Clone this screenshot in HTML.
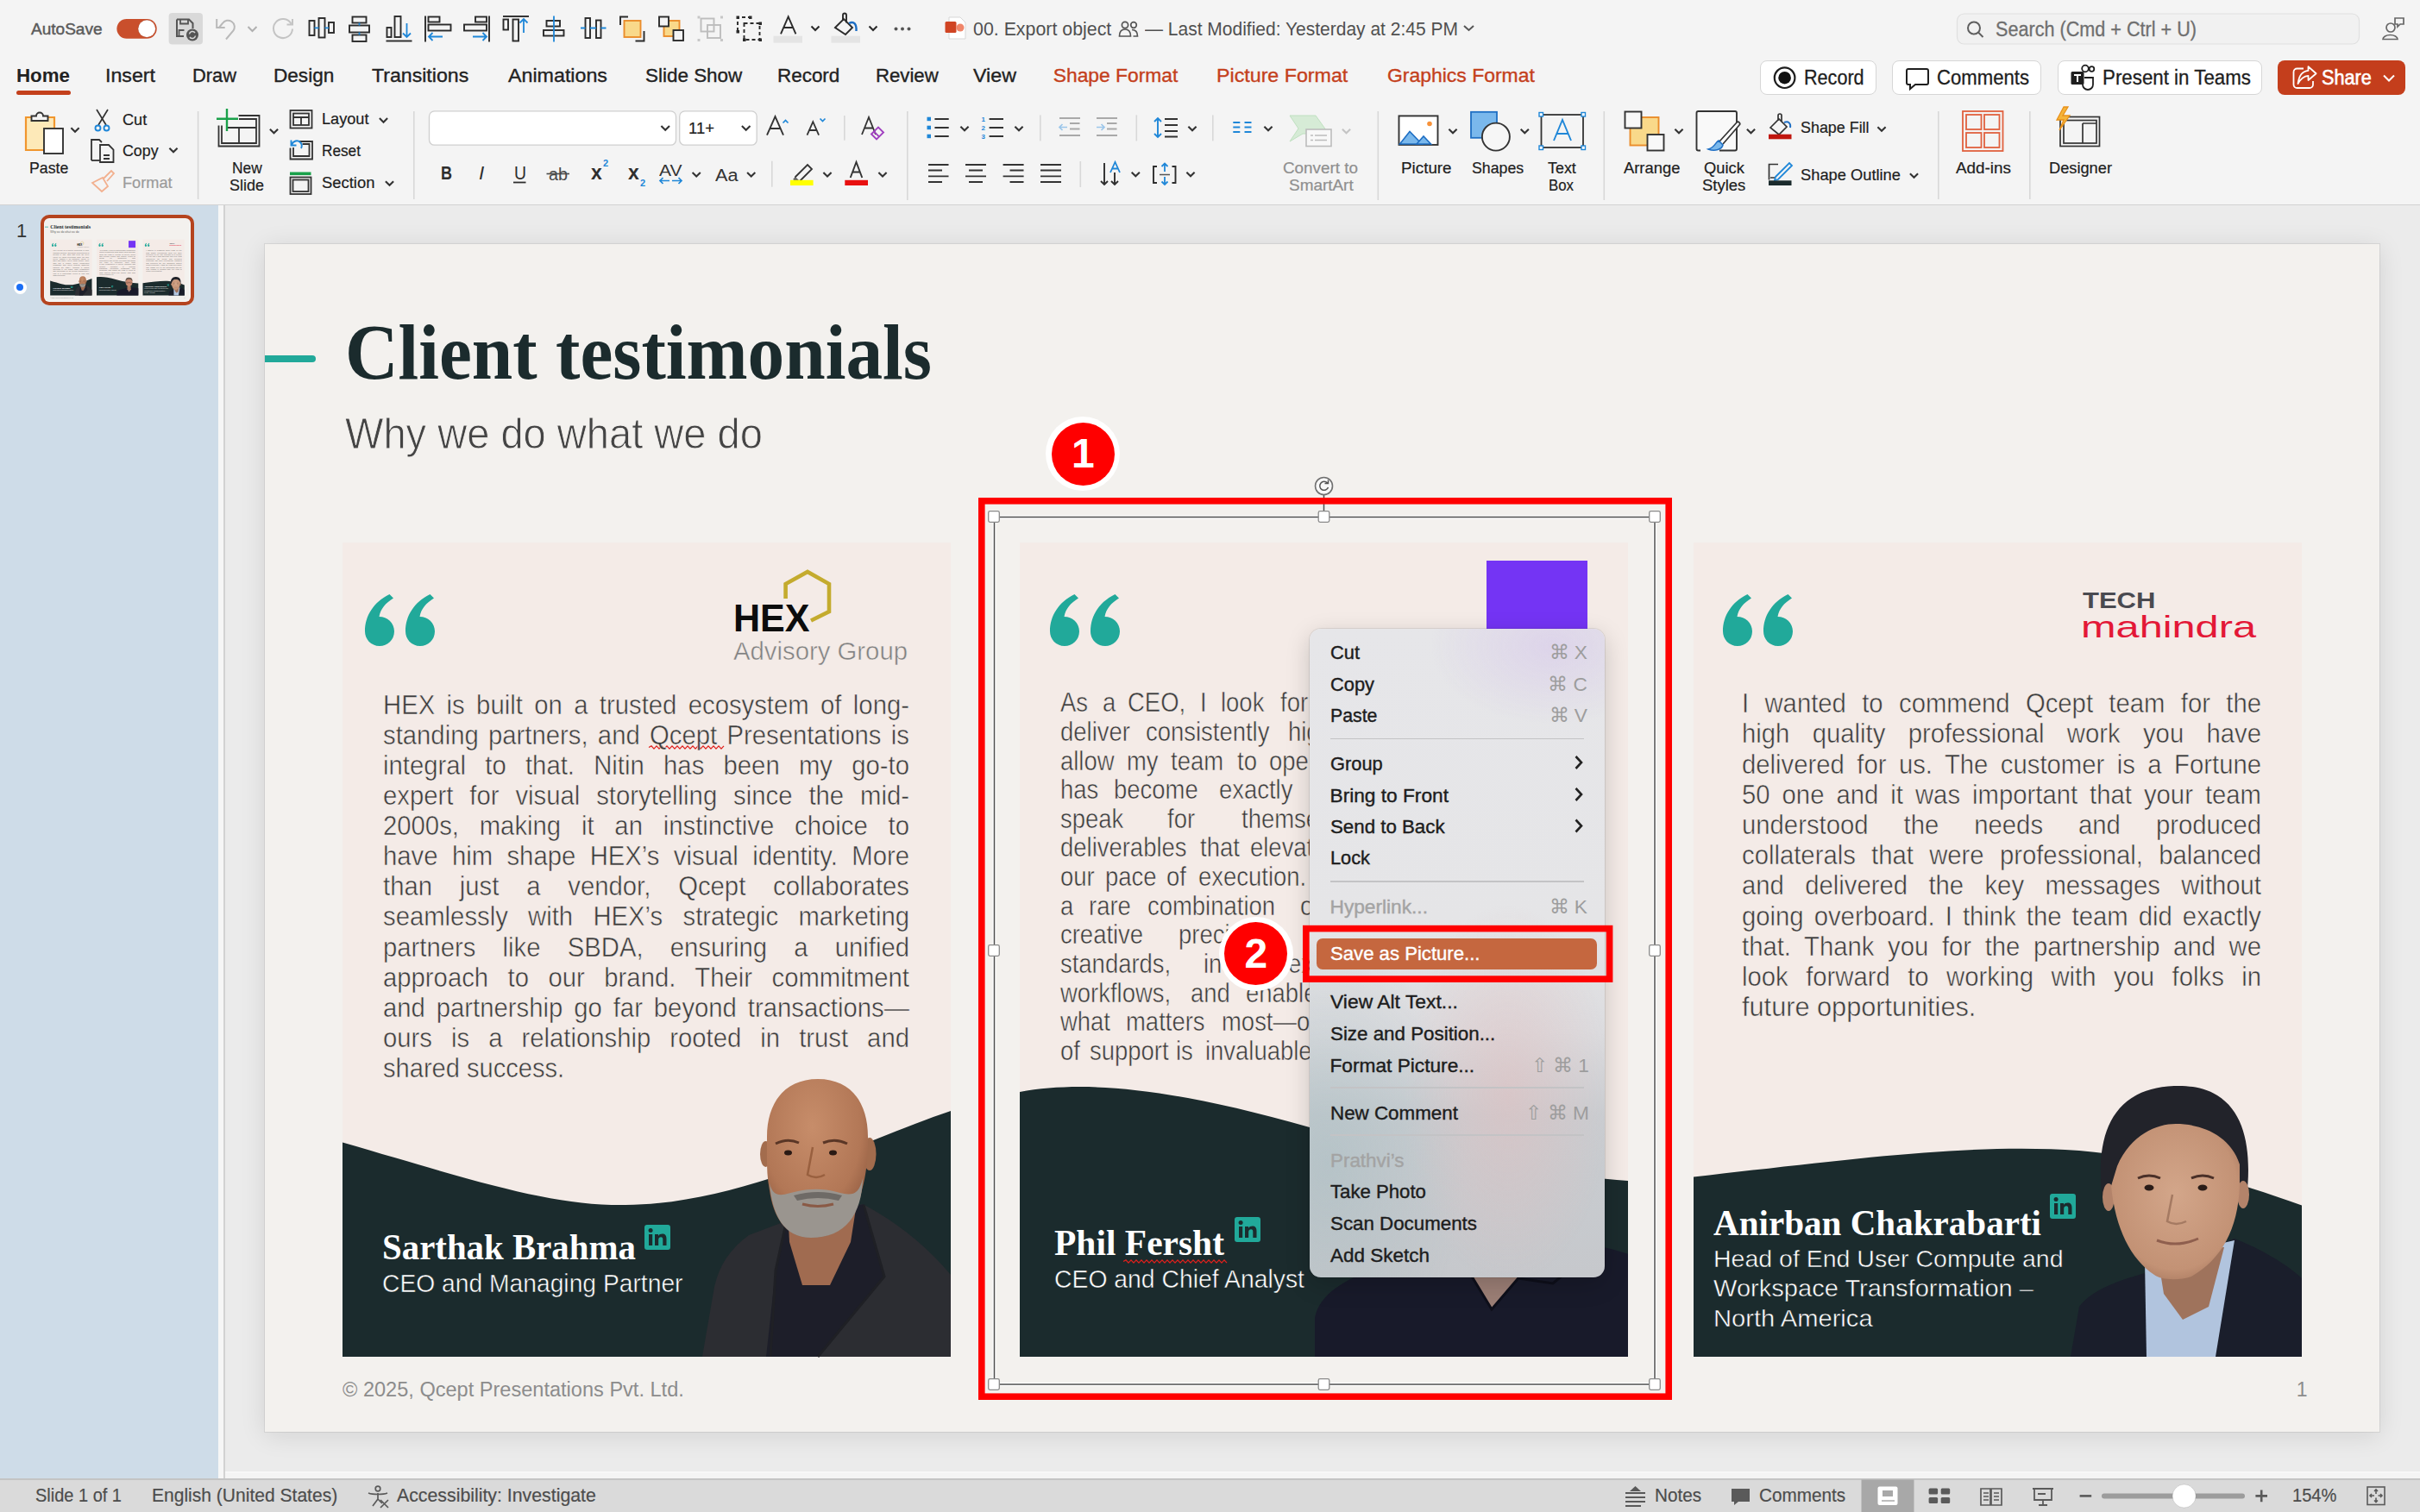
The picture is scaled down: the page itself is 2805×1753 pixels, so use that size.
<!DOCTYPE html><html><head><meta charset="utf-8"><style>*{margin:0;padding:0;box-sizing:border-box}
html,body{width:2805px;height:1753px;overflow:hidden}
body{position:relative;background:#f4f4f4;font-family:"Liberation Sans",sans-serif}
.a{position:absolute}
.t{position:absolute;white-space:nowrap;line-height:1;font-family:"Liberation Sans",sans-serif}
svg{overflow:visible}
</style></head><body><div class="a" style="left:0;top:0;width:2805px;height:237px;background:#f4f4f4"></div><div class="a" style="left:0;top:236.5px;width:2805px;height:2.2px;background:#d2d2d2"></div><div class="t" style="left:36.0px;top:23.5px;font:normal 19.2px 'Liberation Sans',sans-serif;line-height:1;color:#5a5a5a;transform-origin:0 0;transform:scaleX(0.9920);-webkit-text-stroke:0.45px #5a5a5a;">AutoSave</div>
<svg class="a" style="left:0;top:0" width="2805" height="238"><rect x="135.4" y="22" width="46.3" height="22.7" rx="11.35" fill="#c94f2c"/><circle cx="170.2" cy="33.3" r="10" fill="#fff" stroke="rgba(0,0,0,0.12)" stroke-width="0.8"/><rect x="195.6" y="15" width="39.4" height="36.4" rx="4" fill="#d9d9d9"/><path d="M205 22.5h14l4.5 4.5v6 M205 22.5v19.5h8" fill="none" stroke="#555" stroke-width="2"/><path d="M209 22.5v5h9v-5" fill="none" stroke="#555" stroke-width="1.8"/><path d="M207.5 42v-7h6" fill="none" stroke="#555" stroke-width="1.8"/><circle cx="223" cy="40.5" r="7" fill="#555"/><path d="M219.5 39.5a3.6 3.6 0 0 1 6.5-1.5 M226.5 41.5a3.6 3.6 0 0 1-6.5 1.5" fill="none" stroke="#d9d9d9" stroke-width="1.5"/><path d="M262 45.5l8.5-10a7.5 7.5 0 1 0-12.5-8.5l-4.5 5.5 M251.2 22v10h9.5" fill="none" stroke="#b9b9b9" stroke-width="2"/><path d="M287.5 31l5 5 5-5" fill="none" stroke="#b0b0b0" stroke-width="2"/><path d="M337.5 27.5a11 11 0 1 0 1.5 6 M339 22v6.5h-6.5" fill="none" stroke="#c4c4c4" stroke-width="2"/><rect x="358.5" y="24" width="6" height="17" fill="none" stroke="#2b2b2b" stroke-width="1.9"/><rect x="369.5" y="21" width="7" height="22.5" fill="none" stroke="#2b2b2b" stroke-width="1.9"/><rect x="381" y="26" width="6" height="12" fill="none" stroke="#2b2b2b" stroke-width="1.9"/><path d="M364.5 32.4h5 M376.5 32.4h4.5" stroke="#1f87d8" stroke-width="1.8"/><rect x="408.5" y="19.5" width="16" height="7" fill="none" stroke="#2b2b2b" stroke-width="1.9"/><rect x="405" y="29.5" width="23" height="8" fill="none" stroke="#2b2b2b" stroke-width="1.9"/><rect x="408.5" y="40.5" width="16" height="7.5" fill="none" stroke="#2b2b2b" stroke-width="1.9"/><path d="M416.5 26.5v3 M416.5 37.5v3" stroke="#1f87d8" stroke-width="1.8"/><rect x="448.5" y="32" width="5" height="11" fill="none" stroke="#2b2b2b" stroke-width="1.9"/><rect x="457.5" y="19" width="7" height="24" fill="none" stroke="#2b2b2b" stroke-width="1.9"/><path d="M447.5 47.5h30" stroke="#2b2b2b" stroke-width="1.9"/><path d="M471.5 27v16 M467 38.5l4.5 4.5 4.5-4.5" fill="none" stroke="#1f87d8" stroke-width="1.8"/><path d="M493 18.5v30" stroke="#2b2b2b" stroke-width="1.9"/><rect x="496.5" y="19.5" width="13" height="6" fill="none" stroke="#2b2b2b" stroke-width="1.9"/><rect x="496.5" y="28.5" width="26" height="7" fill="none" stroke="#2b2b2b" stroke-width="1.9"/><path d="M497 42.5h16 M501.5 38l-4.5 4.5 4.5 4.5" fill="none" stroke="#1f87d8" stroke-width="1.8"/><path d="M567 18.5v30" stroke="#2b2b2b" stroke-width="1.9"/><rect x="551" y="19.5" width="13" height="6" fill="none" stroke="#2b2b2b" stroke-width="1.9"/><rect x="538" y="28.5" width="26" height="7" fill="none" stroke="#2b2b2b" stroke-width="1.9"/><path d="M548 42.5h16 M559.5 38l4.5 4.5-4.5 4.5" fill="none" stroke="#1f87d8" stroke-width="1.8"/><path d="M583 19h30" stroke="#2b2b2b" stroke-width="1.9"/><rect x="583.5" y="22.5" width="5.5" height="12" fill="none" stroke="#2b2b2b" stroke-width="1.9"/><rect x="594.5" y="22.5" width="6.5" height="25" fill="none" stroke="#2b2b2b" stroke-width="1.9"/><path d="M607 38v-16 M602.5 26.5l4.5-4.5 4.5 4.5" fill="none" stroke="#1f87d8" stroke-width="1.8"/><rect x="633.5" y="24" width="15.5" height="6.5" fill="none" stroke="#2b2b2b" stroke-width="1.9"/><rect x="630" y="35" width="23.5" height="6.5" fill="none" stroke="#2b2b2b" stroke-width="1.9"/><path d="M642 18.5v30" stroke="#1f87d8" stroke-width="1.8"/><rect x="678.5" y="21" width="5.5" height="23" fill="none" stroke="#2b2b2b" stroke-width="1.9"/><rect x="691" y="23.5" width="5.5" height="20.5" fill="none" stroke="#2b2b2b" stroke-width="1.9"/><path d="M673 32.5h5.5 M684 32.5h7 M696.5 32.5h6" stroke="#1f87d8" stroke-width="1.8"/><path d="M719 29v-9.5h9" fill="none" stroke="#2b2b2b" stroke-width="1.9"/><path d="M746.5 36v11.5h-10" fill="none" stroke="#2b2b2b" stroke-width="1.9"/><rect x="723.5" y="24" width="19" height="19" fill="#f9d98a" stroke="#ea8d2b" stroke-width="1.9"/><rect x="769.5" y="24" width="18" height="18" fill="#f9d98a" stroke="#ea8d2b" stroke-width="1.9"/><rect x="764" y="19.5" width="11" height="11" fill="#f4f4f4" stroke="#2b2b2b" stroke-width="1.9"/><rect x="780.5" y="35" width="11.5" height="12" fill="#f4f4f4" stroke="#2b2b2b" stroke-width="1.9"/><g stroke="#bdbdbd" stroke-width="1.9" fill="none"><rect x="812.5" y="21.5" width="15" height="15"/><rect x="820" y="29" width="15" height="15"/></g><g fill="#c7c7c7"><rect x="808.5" y="18.5" width="3" height="3"/><rect x="835" y="18.5" width="3" height="3"/><rect x="808.5" y="45" width="3" height="3"/><rect x="835" y="45" width="3" height="3"/></g><g stroke="#2b2b2b" stroke-width="1.9" fill="none" stroke-dasharray="4 3"><path d="M855 36v-16h16"/><rect x="862.5" y="27" width="18" height="19"/></g><g fill="#2b2b2b"><rect x="853.5" y="18.5" width="3.5" height="3.5"/><rect x="868" y="18.5" width="3.5" height="3.5"/><rect x="853.5" y="35" width="3.5" height="3.5"/><rect x="861" y="44.5" width="3.5" height="3.5"/><rect x="879.5" y="44.5" width="3.5" height="3.5"/><rect x="879.5" y="25.5" width="3.5" height="3.5"/></g><rect x="896.5" y="41.7" width="33.5" height="8" fill="#e4e4e4"/><path d="M905 39.4l8.7-20 8.7 20 M908.3 32h10.8" fill="none" stroke="#2b2b2b" stroke-width="1.9"/><path d="M940.5 30.5l4.5 4.5 4.5-4.5" fill="none" stroke="#2b2b2b" stroke-width="2.1"/><rect x="963.5" y="41.7" width="33.5" height="8" fill="#e4e4e4"/><path d="M968 32l10-10 10 10-8 8z M977 24v-6.5a2 2 0 0 1 4 0v9" fill="none" stroke="#2b2b2b" stroke-width="1.9"/><path d="M984 27c6-3 9 1 8.5 9" fill="none" stroke="#1f6fc4" stroke-width="2.4"/><path d="M1007.5 30.5l4.5 4.5 4.5-4.5" fill="none" stroke="#2b2b2b" stroke-width="2.1"/><g fill="#555"><circle cx="1038.5" cy="33.5" r="2"/><circle cx="1046" cy="33.5" r="2"/><circle cx="1053.5" cy="33.5" r="2"/></g><path d="M1100 20h13l6 6v19h-19z" fill="#fff" stroke="#d7d7d7" stroke-width="1"/><rect x="1095.5" y="25" width="13" height="13" rx="1.5" fill="#d04423"/><circle cx="1113" cy="32" r="4.5" fill="#f0866a"/><g fill="none" stroke="#555" stroke-width="1.7"><circle cx="1304" cy="29" r="3.6"/><path d="M1297.5 42c0-6 3-8 6.5-8s6.5 2 6.5 8z"/><circle cx="1314" cy="29" r="3.3"/><path d="M1312 34.5c4 0 6.5 2 6.5 7.5h-5"/></g><path d="M1697 30l5.5 5 5.5-5" fill="none" stroke="#555" stroke-width="2"/><rect x="2268.5" y="16" width="466" height="35" rx="8" fill="#f1f1f1" stroke="#e0e0e0" stroke-width="1.2"/><g fill="none" stroke="#5f5f5f" stroke-width="2"><circle cx="2288" cy="32.5" r="7"/><path d="M2293 37.5l5.5 5.5"/></g><g fill="none" stroke="#666" stroke-width="1.7"><circle cx="2771" cy="32" r="5"/><path d="M2762 45.5a8.5 5 0 0 1 17 0z"/><path d="M2776 21h10v7h-4l-3 3v-3h-3z"/></g></svg><div class="t" style="left:1127.7px;top:21.9px;font:normal 22.8px 'Liberation Sans',sans-serif;line-height:1;color:#505050;transform-origin:0 0;transform:scaleX(0.9369);">00. Export object</div>
<div class="t" style="left:1326.8px;top:21.9px;font:normal 22.8px 'Liberation Sans',sans-serif;line-height:1;color:#505050;transform-origin:0 0;transform:scaleX(0.9209);">— Last Modified: Yesterday at 2:45 PM</div>
<div class="t" style="left:2313.0px;top:22.5px;font:normal 23px 'Liberation Sans',sans-serif;line-height:1;color:#6f6f6f;transform-origin:0 0;transform:scaleX(0.9397);-webkit-text-stroke:0.3px #6f6f6f;">Search (Cmd + Ctrl + U)</div>
<div class="t" style="left:19.2px;top:76.1px;font:bold 22.8px 'Liberation Sans',sans-serif;line-height:1;color:#222;transform-origin:0 0;transform:scaleX(0.9787);">Home</div>
<div class="t" style="left:121.5px;top:76.1px;font:normal 22.8px 'Liberation Sans',sans-serif;line-height:1;color:#222;transform-origin:0 0;transform:scaleX(1.0171);-webkit-text-stroke:0.35px #222;">Insert</div>
<div class="t" style="left:223.4px;top:76.1px;font:normal 22.8px 'Liberation Sans',sans-serif;line-height:1;color:#222;transform-origin:0 0;transform:scaleX(0.9585);-webkit-text-stroke:0.35px #222;">Draw</div>
<div class="t" style="left:316.7px;top:76.1px;font:normal 22.8px 'Liberation Sans',sans-serif;line-height:1;color:#222;transform-origin:0 0;transform:scaleX(0.9905);-webkit-text-stroke:0.35px #222;">Design</div>
<div class="t" style="left:430.6px;top:76.1px;font:normal 22.8px 'Liberation Sans',sans-serif;line-height:1;color:#222;transform-origin:0 0;transform:scaleX(1.0139);-webkit-text-stroke:0.35px #222;">Transitions</div>
<div class="t" style="left:588.6px;top:76.1px;font:normal 22.8px 'Liberation Sans',sans-serif;line-height:1;color:#222;transform-origin:0 0;transform:scaleX(1.0196);-webkit-text-stroke:0.35px #222;">Animations</div>
<div class="t" style="left:747.7px;top:76.1px;font:normal 22.8px 'Liberation Sans',sans-serif;line-height:1;color:#222;transform-origin:0 0;transform:scaleX(0.9845);-webkit-text-stroke:0.35px #222;">Slide Show</div>
<div class="t" style="left:901.4px;top:76.1px;font:normal 22.8px 'Liberation Sans',sans-serif;line-height:1;color:#222;transform-origin:0 0;transform:scaleX(0.9837);-webkit-text-stroke:0.35px #222;">Record</div>
<div class="t" style="left:1014.5px;top:76.1px;font:normal 22.8px 'Liberation Sans',sans-serif;line-height:1;color:#222;transform-origin:0 0;transform:scaleX(0.9725);-webkit-text-stroke:0.35px #222;">Review</div>
<div class="t" style="left:1127.7px;top:76.1px;font:normal 22.8px 'Liberation Sans',sans-serif;line-height:1;color:#222;transform-origin:0 0;transform:scaleX(1.0182);-webkit-text-stroke:0.35px #222;">View</div>
<div class="t" style="left:1220.8px;top:76.1px;font:normal 22.8px 'Liberation Sans',sans-serif;line-height:1;color:#c4401c;transform-origin:0 0;-webkit-text-stroke:0.35px #c4401c;">Shape Format</div>
<div class="t" style="left:1410.0px;top:76.1px;font:normal 22.8px 'Liberation Sans',sans-serif;line-height:1;color:#c4401c;transform-origin:0 0;transform:scaleX(1.0187);-webkit-text-stroke:0.35px #c4401c;">Picture Format</div>
<div class="t" style="left:1607.5px;top:76.1px;font:normal 22.8px 'Liberation Sans',sans-serif;line-height:1;color:#c4401c;transform-origin:0 0;transform:scaleX(1.0060);-webkit-text-stroke:0.35px #c4401c;">Graphics Format</div>
<div class="a" style="left:18.5px;top:105px;width:63.2px;height:5px;border-radius:3px;background:#c4401c"></div><div class="a" style="left:2039.5px;top:70px;width:135.19999999999982px;height:40px;background:#fff;border:1.5px solid #d6d6d6;border-radius:8px"></div><div class="a" style="left:2193px;top:70px;width:173.4000000000001px;height:40px;background:#fff;border:1.5px solid #d6d6d6;border-radius:8px"></div><div class="a" style="left:2385px;top:70px;width:236.69999999999982px;height:40px;background:#fff;border:1.5px solid #d6d6d6;border-radius:8px"></div><div class="a" style="left:2639.5px;top:70px;width:148.5px;height:40px;background:#c43e1c;border-radius:8px"></div><div class="t" style="left:2091.4px;top:79.0px;font:normal 23.5px 'Liberation Sans',sans-serif;line-height:1;color:#1e1e1e;transform-origin:0 0;transform:scaleX(0.9187);-webkit-text-stroke:0.3px #1e1e1e;">Record</div>
<div class="t" style="left:2245.4px;top:79.0px;font:normal 23.5px 'Liberation Sans',sans-serif;line-height:1;color:#1e1e1e;transform-origin:0 0;transform:scaleX(0.9418);-webkit-text-stroke:0.3px #1e1e1e;">Comments</div>
<div class="t" style="left:2436.8px;top:79.0px;font:normal 23.5px 'Liberation Sans',sans-serif;line-height:1;color:#1e1e1e;transform-origin:0 0;transform:scaleX(0.9496);-webkit-text-stroke:0.3px #1e1e1e;">Present in Teams</div>
<div class="t" style="left:2691.4px;top:79.0px;font:normal 23.5px 'Liberation Sans',sans-serif;line-height:1;color:#ffffff;transform-origin:0 0;transform:scaleX(0.9217);-webkit-text-stroke:0.6px #fff;">Share</div>
<svg class="a" style="left:0;top:0" width="2805" height="238"><circle cx="2068.6" cy="90.2" r="11.8" fill="none" stroke="#1e1e1e" stroke-width="2.2"/><circle cx="2068.6" cy="90.2" r="7.3" fill="#111"/><path d="M2212 80h21a2 2 0 0 1 2 2v14a2 2 0 0 1-2 2h-13l-6 5v-5h-2a2 2 0 0 1-2-2v-14a2 2 0 0 1 2-2z" fill="none" stroke="#1e1e1e" stroke-width="2"/><rect x="2400.5" y="83" width="15" height="15" rx="1.5" fill="#1e1e1e"/><path d="M2404 87h8 M2408 87v8" stroke="#fff" stroke-width="2"/><g fill="none" stroke="#1e1e1e" stroke-width="1.8"><circle cx="2417" cy="79.5" r="3.8"/><circle cx="2424.5" cy="80" r="2.8"/><path d="M2416 90h10v8a6 6 0 0 1-12 0"/></g><g fill="none" stroke="#fff" stroke-width="2"><path d="M2670 79.5h-7.5a4 4 0 0 0-4 4v14.5a4 4 0 0 0 4 4h14.5a4 4 0 0 0 4-4v-4" stroke-width="1.8"/><path d="M2663.5 97C2664.5 88.5 2668.5 82.5 2675.5 81.8V77.2L2684.6 85.2L2675.5 93V87.8C2670 88.2 2666.5 91.5 2663.5 97Z" stroke-width="1.8" stroke-linejoin="round"/></g><path d="M2763 87.5l6 6 6-6" fill="none" stroke="#fff" stroke-width="2"/></svg><svg class="a" style="left:0;top:0" width="2805" height="238"><path d="M30 136h33v38h-33z" fill="#fde9b8" stroke="#f0962e" stroke-width="2.2"/><path d="M36.5 140v-5.5h5.5a4 4 0 0 1 8 0h5.5v5.5z" fill="#f4f4f4" stroke="#333" stroke-width="1.9"/><rect x="51" y="149" width="22" height="29" fill="#fff" stroke="#333" stroke-width="1.9"/><path d="M82.4 148.2l4.6 4.6 4.6 -4.6" fill="none" stroke="#333" stroke-width="2.1"/><g fill="none" stroke="#333" stroke-width="1.7"><path d="M112 127l11 18 M125 127l-11 18"/></g><g fill="none" stroke="#1f87d8" stroke-width="1.9"><circle cx="113.5" cy="148.5" r="3"/><circle cx="123.5" cy="148.5" r="3"/></g><g fill="none" stroke="#333" stroke-width="1.8"><path d="M106 186v-24h9l3 3"/><path d="M106 186h10"/><path d="M116 168h10l5.5 5.5v14.5h-15.5z"/><path d="M120 180h7 M120 184h7"/></g><path d="M196.4 171.7l4.6 4.6 4.6 -4.6" fill="none" stroke="#333" stroke-width="2.1"/><g fill="none" stroke="#f2b08f" stroke-width="1.8"><path d="M107 212l12-6 6 10-7 6z"/><path d="M120 207l9-9 3 3-8 9"/></g><rect x="228.8" y="129" width="1.6" height="102" fill="#d8d8d8"/><g fill="none" stroke="#333" stroke-width="1.8"><path d="M276.5 134h24v35.5h-47v-24"/><path d="M257 145.5v20.5h40v-28h-20"/><path d="M264 148h33 M277 148v18"/></g><path d="M263 126v26 M251 137.8h25" stroke="#1aa14a" stroke-width="2.4"/><path d="M312.9 149.7l4.6 4.6 4.6 -4.6" fill="none" stroke="#333" stroke-width="2.1"/><g fill="none" stroke="#333" stroke-width="1.8"><rect x="336.5" y="128" width="25" height="20.5"/><rect x="340" y="131.5" width="18" height="13.5"/><path d="M340 136h18 M349 136v9"/></g><path d="M439.9 137.1l4.6 4.6 4.6 -4.6" fill="none" stroke="#333" stroke-width="2.1"/><g fill="none" stroke="#333" stroke-width="1.8"><path d="M347 164h15v20.5h-25.5v-13"/><path d="M340 171v10h18.5v-14h-8"/></g><path d="M338 168c2-5 7-6 10-3 2 2 2 5 1 7 M337.5 162.5v6h6" fill="none" stroke="#1f87d8" stroke-width="1.9"/><rect x="336" y="199.5" width="24.5" height="3.6" fill="#1aa14a"/><g fill="none" stroke="#333" stroke-width="1.8"><rect x="336.5" y="205.5" width="24" height="19.5"/><rect x="339.5" y="208.5" width="18" height="13.5"/></g><path d="M446.9 210.2l4.6 4.6 4.6 -4.6" fill="none" stroke="#333" stroke-width="2.1"/><rect x="479" y="129" width="1.6" height="102" fill="#d8d8d8"/><rect x="497.5" y="128.9" width="286" height="39.3" rx="6" fill="#fff" stroke="#cfcfcf" stroke-width="1.3"/><path d="M766.4 146.0l4.8 4.8 4.8 -4.8" fill="none" stroke="#333" stroke-width="2.1"/><rect x="787.7" y="128.9" width="89.5" height="39.3" rx="6" fill="#fff" stroke="#cfcfcf" stroke-width="1.3"/><path d="M859.9 146.0l4.8 4.8 4.8 -4.8" fill="none" stroke="#333" stroke-width="2.1"/><path d="M889 156.7l9.5-21.5 9.5 21.5 M892.5 149h12" fill="none" stroke="#333" stroke-width="1.9"/><path d="M907.5 142.5l3-3 3 3" fill="none" stroke="#1f87d8" stroke-width="1.7"/><path d="M935.5 156.7l6.8-15.5 6.8 15.5 M938 151h8.6" fill="none" stroke="#333" stroke-width="1.8"/><path d="M950.5 137.5l3 3 3-3" fill="none" stroke="#1f87d8" stroke-width="1.7"/><rect x="978" y="134" width="1.6" height="28.7" fill="#d8d8d8"/><path d="M999 156l8-20 8 20 M1002 148.5h10" fill="none" stroke="#333" stroke-width="1.8"/><path d="M1010 155.5l8-8 6 6-8 8z M1013 152.5l6 6" fill="none" stroke="#a040c0" stroke-width="1.9"/><rect x="1051" y="129" width="1.6" height="103" fill="#d8d8d8"/><path d="M595 211.5h14.5" stroke="#2e2e2e" stroke-width="1.8"/><path d="M633.5 201.5h26.5" stroke="#4a4a4a" stroke-width="1.6"/><path d="M765 209.5h11 M768.5 206l-3.5 3.5 3.5 3.5 M779 209.5h11 M786.5 206l3.5 3.5-3.5 3.5" fill="none" stroke="#1f87d8" stroke-width="1.7"/><path d="M802.6 200.0l4.6 4.6 4.6 -4.6" fill="none" stroke="#333" stroke-width="2.1"/><path d="M866.1 200.0l4.6 4.6 4.6 -4.6" fill="none" stroke="#333" stroke-width="2.1"/><rect x="894" y="186.7" width="1.6" height="30" fill="#d8d8d8"/><path d="M922 205l14-14 5 5-14 14h-6z" fill="none" stroke="#333" stroke-width="1.8"/><path d="M919 208l3-3 4 4-2 2z" fill="#666"/><rect x="916" y="208.8" width="26.6" height="6.2" fill="#ffff00"/><path d="M954.4 200.0l4.6 4.6 4.6 -4.6" fill="none" stroke="#333" stroke-width="2.1"/><path d="M985.7 206l6.8-18 6.8 18 M988.5 199.5h8" fill="none" stroke="#333" stroke-width="1.9"/><rect x="979.3" y="208.8" width="26.7" height="6.2" fill="#e81010"/><path d="M1018.4 200.0l4.6 4.6 4.6 -4.6" fill="none" stroke="#333" stroke-width="2.1"/><g fill="#1f87d8"><rect x="1074.5" y="135.7" width="4.5" height="4.5"/><rect x="1074.5" y="145.7" width="4.5" height="4.5"/><rect x="1074.5" y="155.7" width="4.5" height="4.5"/></g><path d="M1083.4 138h16.3 M1083.4 148h16.3 M1083.4 158h16.3" stroke="#333" stroke-width="1.8"/><path d="M1113.4 146.7l4.6 4.6 4.6 -4.6" fill="none" stroke="#333" stroke-width="2.1"/><g font-family="Liberation Sans" font-size="8" font-weight="bold" fill="#1f87d8"><text x="1137.5" y="141">1</text><text x="1137.5" y="151">2</text><text x="1137.5" y="161">3</text></g><path d="M1146.6 138h16.4 M1146.6 148h16.4 M1146.6 158h16.4" stroke="#333" stroke-width="1.8"/><path d="M1176.4 146.7l4.6 4.6 4.6 -4.6" fill="none" stroke="#333" stroke-width="2.1"/><rect x="1205" y="133.4" width="1.6" height="30" fill="#d8d8d8"/><path d="M1228 137h24 M1240 143h11.5 M1240 149.5h11.5 M1228 157h24" stroke="#a9a9a9" stroke-width="1.8"/><path d="M1237 147.5h-9 M1231.5 144l-3.5 3.5 3.5 3.5" fill="none" stroke="#9cc6ea" stroke-width="1.7"/><path d="M1271 137h24 M1283 143h11.5 M1283 149.5h11.5 M1271 157h24" stroke="#a9a9a9" stroke-width="1.8"/><path d="M1271 147.5h9 M1276.5 144l3.5 3.5-3.5 3.5" fill="none" stroke="#9cc6ea" stroke-width="1.7"/><rect x="1316.5" y="133.4" width="1.6" height="30" fill="#d8d8d8"/><path d="M1342 137v22 M1338 141l4-4 4 4 M1338 155l4 4 4-4" fill="none" stroke="#1f87d8" stroke-width="1.9"/><path d="M1350 138h15 M1350 145h15 M1350 152h15 M1350 158.5h15" stroke="#333" stroke-width="1.8"/><path d="M1377.4 146.7l4.6 4.6 4.6 -4.6" fill="none" stroke="#333" stroke-width="2.1"/><rect x="1405" y="133.4" width="1.6" height="30" fill="#d8d8d8"/><path d="M1429.3 142h8 M1429.3 147.5h8 M1429.3 153h8 M1442.5 142h8 M1442.5 147.5h8 M1442.5 153h8" stroke="#1f87d8" stroke-width="1.8"/><path d="M1465.4 146.7l4.6 4.6 4.6 -4.6" fill="none" stroke="#333" stroke-width="2.1"/><path d="M1495 134h30l15 21h-30l-15 9 10-15z" fill="#d6ebd6" stroke="#bfe0c0" stroke-width="1"/><rect x="1514" y="150" width="29" height="19.5" fill="#f8f8f8" stroke="#bcbcbc" stroke-width="1.6"/><path d="M1519 157h3 M1524 157h14 M1519 162.5h3 M1524 162.5h14" stroke="#bcbcbc" stroke-width="1.4"/><path d="M1555.9 149.7l4.6 4.6 4.6 -4.6" fill="none" stroke="#c4c4c4" stroke-width="2.1"/><rect x="1596.5" y="129" width="1.6" height="103" fill="#d8d8d8"/><path d="M1076 191h23.5 M1076 197.5h16 M1076 204.3h23.5 M1076 211h16" stroke="#333" stroke-width="1.8"/><path d="M1119 191h24 M1123 197.5h16 M1119 204.3h24 M1123 211h16" stroke="#333" stroke-width="1.8"/><path d="M1162.6 191h24 M1170.5 197.5h16 M1162.6 204.3h24 M1170.5 211h16" stroke="#333" stroke-width="1.8"/><path d="M1206 191h24 M1206 197.5h24 M1206 204.3h24 M1206 211h24" stroke="#333" stroke-width="1.8"/><rect x="1251.5" y="187" width="1.6" height="30" fill="#d8d8d8"/><path d="M1280 189v25 M1276 210l4 4 4-4 M1292 200v14 M1288 210l4 4 4-4" fill="none" stroke="#2e2e2e" stroke-width="1.9"/><path d="M1287 200l5.5-12 5.5 12 M1289 195.5h7" fill="none" stroke="#1f87d8" stroke-width="1.8"/><path d="M1311.7 199.7l4.6 4.6 4.6 -4.6" fill="none" stroke="#333" stroke-width="2.1"/><path d="M1341 193h-4v19h4 M1358.5 193h4v19h-4" fill="none" stroke="#2e2e2e" stroke-width="1.9"/><path d="M1344 202.5h12" stroke="#555" stroke-width="1.5"/><path d="M1350 190v9 M1346.5 193l3.5-3.5 3.5 3.5 M1350 205v9 M1346.5 210.5l3.5 3.5 3.5-3.5" fill="none" stroke="#1f87d8" stroke-width="1.8"/><path d="M1375.4 199.7l4.6 4.6 4.6 -4.6" fill="none" stroke="#333" stroke-width="2.1"/><rect x="1621.5" y="134.4" width="45" height="33.5" fill="#fff" stroke="#333" stroke-width="1.9"/><path d="M1622.5 167l11.5-14.5 14 14.5z" fill="#7ab8ec" stroke="#1f6fc4" stroke-width="1.6"/><path d="M1642 167l8-9 8.5 9z" fill="#7ab8ec" stroke="#1f6fc4" stroke-width="1.6"/><circle cx="1657" cy="143.5" r="2.8" fill="#f7923a"/><path d="M1679.4 149.7l4.6 4.6 4.6 -4.6" fill="none" stroke="#333" stroke-width="2.1"/><rect x="1705" y="129.8" width="30" height="30" fill="#7ab8ec" stroke="#1f6fc4" stroke-width="1.8"/><circle cx="1733.9" cy="158.6" r="16" fill="#f6f6f6" stroke="#333" stroke-width="1.9"/><path d="M1762.7 149.7l4.6 4.6 4.6 -4.6" fill="none" stroke="#333" stroke-width="2.1"/><rect x="1786.5" y="133" width="48.5" height="38" fill="none" stroke="#333" stroke-width="1.8"/><g fill="#fff" stroke="#1f87d8" stroke-width="1.4"><rect x="1784" y="130.5" width="4.5" height="4.5"/><rect x="1833" y="130.5" width="4.5" height="4.5"/><rect x="1784" y="169" width="4.5" height="4.5"/><rect x="1833" y="169" width="4.5" height="4.5"/></g><path d="M1801 163l10-24 10 24 M1804.5 155h13" fill="none" stroke="#1f87d8" stroke-width="1.9"/><rect x="1858.5" y="129" width="1.6" height="103" fill="#d8d8d8"/><rect x="1889.5" y="136" width="33" height="32.5" fill="#f9d98a" stroke="#ea8d2b" stroke-width="1.9"/><rect x="1883.5" y="129.5" width="19" height="19" fill="#f8f8f8" stroke="#333" stroke-width="1.9"/><rect x="1909.5" y="156" width="19" height="18.5" fill="#f8f8f8" stroke="#333" stroke-width="1.9"/><path d="M1941.4 149.7l4.6 4.6 4.6 -4.6" fill="none" stroke="#333" stroke-width="2.1"/><path d="M1971 174.5h-2.5a2 2 0 0 1-2-2v-41.5a2 2 0 0 1 2-2h42.5a2 2 0 0 1 2 2v41.5a2 2 0 0 1-2 2h-18" fill="#f9f9f9" stroke="#333" stroke-width="1.9"/><path d="M1993 164l20-22a2 2 0 0 1 3 3l-19 22" fill="#fff" stroke="#333" stroke-width="1.7"/><path d="M1992 163c-4 2-4 8-12 10 8 3 16 0 17-5z" fill="#7ab8ec" stroke="#1f6fc4" stroke-width="1.5"/><path d="M2024.9 149.7l4.6 4.6 4.6 -4.6" fill="none" stroke="#333" stroke-width="2.1"/><path d="M2052 148l10-10 9 9-9 9z M2061 140v-6a2 2 0 0 1 4 0v7" fill="none" stroke="#333" stroke-width="1.7"/><path d="M2068 142c5-2 8 1 7 6" fill="none" stroke="#1f6fc4" stroke-width="2"/><rect x="2050" y="155.7" width="26.5" height="5.6" fill="#c0160e"/><path d="M2176.4 147.2l4.6 4.6 4.6 -4.6" fill="none" stroke="#333" stroke-width="2.1"/><path d="M2061 190.5h-10.5v18 M2052 206h6" fill="none" stroke="#333" stroke-width="1.7"/><path d="M2058 205l16-16 3 3-16 16-4 1z" fill="none" stroke="#1f87d8" stroke-width="1.8"/><rect x="2050" y="209.3" width="26.5" height="5.7" fill="#1b2b2d"/><path d="M2213.9 201.2l4.6 4.6 4.6 -4.6" fill="none" stroke="#333" stroke-width="2.1"/><rect x="2246" y="129" width="1.6" height="102" fill="#d8d8d8"/><g fill="none" stroke="#e0613f" stroke-width="1.8"><rect x="2275" y="129" width="46.5" height="46"/><rect x="2279" y="133" width="17.5" height="17"/><rect x="2300" y="133" width="17.5" height="17"/><rect x="2279" y="154" width="17.5" height="17"/><rect x="2300" y="154" width="17.5" height="17"/></g><rect x="2352" y="129" width="1.6" height="102" fill="#d8d8d8"/><g fill="none" stroke="#333" stroke-width="1.7"><rect x="2388" y="135.5" width="45.5" height="34"/><rect x="2392" y="139.5" width="38" height="26.5"/><path d="M2414 143h16 M2414 143v23"/></g><path d="M2392 124l-8 15h8l-5 12 12-17h-8l6-10z" fill="#f5b43a" stroke="#e89019" stroke-width="1.3"/></svg><div class="t" style="left:34.0px;top:186.9px;font:normal 17.6px 'Liberation Sans',sans-serif;line-height:1;color:#1e1e1e;transform-origin:0 0;transform:scaleX(1.0065);-webkit-text-stroke:0.2px #1e1e1e;">Paste</div>
<div class="t" style="left:142.4px;top:130.8px;font:normal 17.6px 'Liberation Sans',sans-serif;line-height:1;color:#1e1e1e;transform-origin:0 0;transform:scaleX(1.0296);-webkit-text-stroke:0.2px #1e1e1e;">Cut</div>
<div class="t" style="left:142.4px;top:166.9px;font:normal 17.6px 'Liberation Sans',sans-serif;line-height:1;color:#1e1e1e;transform-origin:0 0;transform:scaleX(1.0125);-webkit-text-stroke:0.2px #1e1e1e;">Copy</div>
<div class="t" style="left:142.4px;top:203.8px;font:normal 17.6px 'Liberation Sans',sans-serif;line-height:1;color:#9b9b9b;transform-origin:0 0;transform:scaleX(1.0333);-webkit-text-stroke:0.2px #9b9b9b;">Format</div>
<div class="t" style="left:268.7px;top:186.9px;font:normal 17.6px 'Liberation Sans',sans-serif;line-height:1;color:#1e1e1e;transform-origin:0 0;transform:scaleX(0.9855);-webkit-text-stroke:0.2px #1e1e1e;">New</div>
<div class="t" style="left:266.4px;top:207.1px;font:normal 17.6px 'Liberation Sans',sans-serif;line-height:1;color:#1e1e1e;transform-origin:0 0;transform:scaleX(1.0220);-webkit-text-stroke:0.2px #1e1e1e;">Slide</div>
<div class="t" style="left:372.9px;top:130.4px;font:normal 17.6px 'Liberation Sans',sans-serif;line-height:1;color:#1e1e1e;transform-origin:0 0;transform:scaleX(1.0313);-webkit-text-stroke:0.2px #1e1e1e;">Layout</div>
<div class="t" style="left:372.9px;top:166.9px;font:normal 17.6px 'Liberation Sans',sans-serif;line-height:1;color:#1e1e1e;transform-origin:0 0;transform:scaleX(0.9787);-webkit-text-stroke:0.2px #1e1e1e;">Reset</div>
<div class="t" style="left:372.9px;top:203.8px;font:normal 17.6px 'Liberation Sans',sans-serif;line-height:1;color:#1e1e1e;transform-origin:0 0;transform:scaleX(1.0459);-webkit-text-stroke:0.2px #1e1e1e;">Section</div>
<div class="t" style="left:797.6px;top:140.6px;font:normal 17.6px 'Liberation Sans',sans-serif;line-height:1;color:#1e1e1e;transform-origin:0 0;transform:scaleX(1.0508);-webkit-text-stroke:0.2px #1e1e1e;">11+</div>
<div class="t" style="left:511.0px;top:189.8px;font:bold 22.5px 'Liberation Sans',sans-serif;line-height:1;color:#2e2e2e;transform-origin:0 0;transform:scaleX(0.8000);">B</div>
<div class="t" style="left:555.0px;top:189.8px;font:normal 22.5px 'Liberation Sans',sans-serif;line-height:1;color:#2e2e2e;transform-origin:0 0;font-style:italic;">I</div>
<div class="t" style="left:595.5px;top:189.8px;font:normal 22.5px 'Liberation Sans',sans-serif;line-height:1;color:#2e2e2e;transform-origin:0 0;transform:scaleX(0.8616);">U</div>
<div class="t" style="left:636.0px;top:191.9px;font:normal 20px 'Liberation Sans',sans-serif;line-height:1;color:#4a4a4a;transform-origin:0 0;transform:scaleX(0.9889);">ab</div>
<div class="t" style="left:685.0px;top:189.3px;font:bold 23px 'Liberation Sans',sans-serif;line-height:1;color:#2e2e2e;transform-origin:0 0;">x</div>
<div class="t" style="left:699.0px;top:183.7px;font:bold 11px 'Liberation Sans',sans-serif;line-height:1;color:#1f87d8;transform-origin:0 0;">2</div>
<div class="t" style="left:728.0px;top:189.3px;font:bold 23px 'Liberation Sans',sans-serif;line-height:1;color:#2e2e2e;transform-origin:0 0;">x</div>
<div class="t" style="left:742.0px;top:207.2px;font:bold 11px 'Liberation Sans',sans-serif;line-height:1;color:#1f87d8;transform-origin:0 0;">2</div>
<div class="t" style="left:764.0px;top:187.9px;font:normal 19px 'Liberation Sans',sans-serif;line-height:1;color:#333;transform-origin:0 0;transform:scaleX(1.1071);">AV</div>
<div class="t" style="left:828.8px;top:193.1px;font:normal 20px 'Liberation Sans',sans-serif;line-height:1;color:#333;transform-origin:0 0;transform:scaleX(1.0832);">Aa</div>
<div class="t" style="left:1487.3px;top:187.3px;font:normal 17.6px 'Liberation Sans',sans-serif;line-height:1;color:#8f8f8f;transform-origin:0 0;transform:scaleX(1.0715);-webkit-text-stroke:0.2px #8f8f8f;">Convert to</div>
<div class="t" style="left:1493.6px;top:207.1px;font:normal 17.6px 'Liberation Sans',sans-serif;line-height:1;color:#8f8f8f;transform-origin:0 0;transform:scaleX(1.0759);-webkit-text-stroke:0.2px #8f8f8f;">SmartArt</div>
<div class="t" style="left:1624.0px;top:187.3px;font:normal 17.6px 'Liberation Sans',sans-serif;line-height:1;color:#1e1e1e;transform-origin:0 0;transform:scaleX(1.0698);-webkit-text-stroke:0.2px #1e1e1e;">Picture</div>
<div class="t" style="left:1706.0px;top:187.3px;font:normal 17.6px 'Liberation Sans',sans-serif;line-height:1;color:#1e1e1e;transform-origin:0 0;transform:scaleX(1.0085);-webkit-text-stroke:0.2px #1e1e1e;">Shapes</div>
<div class="t" style="left:1793.7px;top:187.3px;font:normal 17.6px 'Liberation Sans',sans-serif;line-height:1;color:#1e1e1e;transform-origin:0 0;transform:scaleX(1.0162);-webkit-text-stroke:0.2px #1e1e1e;">Text</div>
<div class="t" style="left:1795.2px;top:207.1px;font:normal 17.6px 'Liberation Sans',sans-serif;line-height:1;color:#1e1e1e;transform-origin:0 0;transform:scaleX(0.9562);-webkit-text-stroke:0.2px #1e1e1e;">Box</div>
<div class="t" style="left:1881.6px;top:187.3px;font:normal 17.6px 'Liberation Sans',sans-serif;line-height:1;color:#1e1e1e;transform-origin:0 0;transform:scaleX(1.0444);-webkit-text-stroke:0.2px #1e1e1e;">Arrange</div>
<div class="t" style="left:1974.9px;top:187.3px;font:normal 17.6px 'Liberation Sans',sans-serif;line-height:1;color:#1e1e1e;transform-origin:0 0;transform:scaleX(1.0403);-webkit-text-stroke:0.2px #1e1e1e;">Quick</div>
<div class="t" style="left:1973.0px;top:207.1px;font:normal 17.6px 'Liberation Sans',sans-serif;line-height:1;color:#1e1e1e;transform-origin:0 0;transform:scaleX(1.0495);-webkit-text-stroke:0.2px #1e1e1e;">Styles</div>
<div class="t" style="left:2087.0px;top:140.1px;font:normal 17.6px 'Liberation Sans',sans-serif;line-height:1;color:#1e1e1e;transform-origin:0 0;transform:scaleX(1.0170);-webkit-text-stroke:0.2px #1e1e1e;">Shape Fill</div>
<div class="t" style="left:2087.0px;top:195.1px;font:normal 17.6px 'Liberation Sans',sans-serif;line-height:1;color:#1e1e1e;transform-origin:0 0;transform:scaleX(1.0399);-webkit-text-stroke:0.2px #1e1e1e;">Shape Outline</div>
<div class="t" style="left:2267.0px;top:187.3px;font:normal 17.6px 'Liberation Sans',sans-serif;line-height:1;color:#1e1e1e;transform-origin:0 0;transform:scaleX(1.0724);-webkit-text-stroke:0.2px #1e1e1e;">Add-ins</div>
<div class="t" style="left:2374.5px;top:187.3px;font:normal 17.6px 'Liberation Sans',sans-serif;line-height:1;color:#1e1e1e;transform-origin:0 0;transform:scaleX(1.0364);-webkit-text-stroke:0.2px #1e1e1e;">Designer</div>
<div class="a" style="left:0;top:238px;width:253px;height:1477px;background:#cedce8"></div><div class="a" style="left:253px;top:238px;width:7px;height:1477px;background:#f6f6f6"></div><div class="a" style="left:259px;top:238px;width:1.5px;height:1477px;background:#d2d2d2"></div><div class="a" style="left:260.5px;top:238px;width:2545px;height:1470px;background:#ebebeb"></div><div class="a" style="left:260.5px;top:1706px;width:2545px;height:2px;background:#f7f7f7"></div><div class="a" style="left:0;top:1714px;width:2805px;height:39px;background:#dadada"></div><div class="a" style="left:0;top:1714px;width:2805px;height:1.5px;background:#c4c4c4"></div><div class="t" style="left:19.0px;top:256.9px;font:normal 22px 'Liberation Sans',sans-serif;line-height:1;color:#333;transform-origin:0 0;">1</div>
<div class="a" style="left:15.5px;top:325.5px;width:15px;height:15px;border-radius:50%;background:#fff"></div><div class="a" style="left:19px;top:329px;width:8px;height:8px;border-radius:50%;background:#1a6ef5"></div><div class="a" style="left:47px;top:249px;width:178px;height:105px;border-radius:10px;background:#b5441f"></div><div class="a" style="left:51px;top:253px;width:170px;height:96.5px;border-radius:6px;background:#f7f7f7"></div><div class="t" style="left:40.5px;top:1723.2px;font:normal 22.2px 'Liberation Sans',sans-serif;line-height:1;color:#4d4d4d;transform-origin:0 0;transform:scaleX(0.9003);-webkit-text-stroke:0.2px #4d4d4d;">Slide 1 of 1</div>
<div class="t" style="left:176.4px;top:1723.2px;font:normal 22.2px 'Liberation Sans',sans-serif;line-height:1;color:#4d4d4d;transform-origin:0 0;transform:scaleX(0.9483);-webkit-text-stroke:0.2px #4d4d4d;">English (United States)</div>
<div class="t" style="left:460.0px;top:1723.2px;font:normal 22.2px 'Liberation Sans',sans-serif;line-height:1;color:#4d4d4d;transform-origin:0 0;transform:scaleX(0.9601);-webkit-text-stroke:0.2px #4d4d4d;">Accessibility: Investigate</div>
<div class="t" style="left:1917.8px;top:1723.4px;font:normal 22.2px 'Liberation Sans',sans-serif;line-height:1;color:#4d4d4d;transform-origin:0 0;transform:scaleX(0.9346);-webkit-text-stroke:0.2px #4d4d4d;">Notes</div>
<div class="t" style="left:2038.8px;top:1723.4px;font:normal 22.2px 'Liberation Sans',sans-serif;line-height:1;color:#4d4d4d;transform-origin:0 0;transform:scaleX(0.9336);-webkit-text-stroke:0.2px #4d4d4d;">Comments</div>
<div class="t" style="left:2656.6px;top:1723.4px;font:normal 22.2px 'Liberation Sans',sans-serif;line-height:1;color:#4d4d4d;transform-origin:0 0;transform:scaleX(0.9052);-webkit-text-stroke:0.2px #4d4d4d;">154%</div>
<svg class="a" style="left:0;top:0" width="2805" height="1753"><g fill="none" stroke="#5a5a5a" stroke-width="1.7"><circle cx="438" cy="1726" r="2.8"/><path d="M427 1731c5 2 17 2 22 0 M438 1731v7l-6 8 M438 1738l5 5"/><path d="M441 1739l9 9 M450 1739l-9 9"/></g><rect x="2157.5" y="1715.5" width="61" height="37.5" fill="#a8a8a8"/><g fill="none" stroke="#595959" stroke-width="1.8"><path d="M1884 1736h23 M1884 1741h23 M1884 1746h18 M1884 1731h23"/></g><path d="M1889 1729l6.5-6 6.5 6z" fill="#595959"/><path d="M2007 1726h21v15h-13l-5 4v-4h-3z" fill="#5a5a5a"/><rect x="2176.5" y="1723.5" width="23" height="21.5" rx="2" fill="#fff"/><rect x="2182" y="1728" width="12" height="7" fill="#a8a8a8"/><path d="M2181 1740h15" stroke="#a8a8a8" stroke-width="1.5"/><g fill="#5a5a5a"><rect x="2235.6" y="1725.4" width="10.5" height="7" rx="1.5"/><rect x="2249.7" y="1725.4" width="10.5" height="7" rx="1.5"/><rect x="2235.6" y="1736" width="10.5" height="7" rx="1.5"/><rect x="2249.7" y="1736" width="10.5" height="7" rx="1.5"/></g><g fill="none" stroke="#5a5a5a" stroke-width="1.7"><path d="M2296 1726h11v19h-11z M2308 1726h12v19h-12z M2299 1731h6 M2299 1735h6 M2299 1739h6 M2311 1731h6 M2311 1735h6 M2311 1739h6"/></g><g fill="none" stroke="#5a5a5a" stroke-width="1.8"><path d="M2356 1726h24 M2358 1726v13h20v-13 M2368 1739v6 M2363 1745h10 M2362 1732h9"/></g><path d="M2410.6 1734.4h13.6" stroke="#5a5a5a" stroke-width="2.6"/><rect x="2436" y="1731.5" width="166" height="6" rx="3" fill="#9c9c9c"/><circle cx="2531.6" cy="1734.5" r="13.5" fill="#fff" stroke="rgba(0,0,0,0.15)" stroke-width="0.8"/><path d="M2614.4 1734.4h13.6 M2621.2 1727.5v13.8" stroke="#5a5a5a" stroke-width="2.6"/><g fill="none" stroke="#5a5a5a" stroke-width="1.6"><rect x="2744" y="1724" width="20" height="20.5"/><path d="M2754 1727v5 M2754 1736.5v5 M2747 1734h5 M2756.5 1734h5 M2752 1729l2-2 2 2 M2752 1739.5l2 2 2-2 M2749 1732l-2 2 2 2 M2759 1732l2 2-2 2"/></g></svg><div class="a" style="left:52px;top:254px;width:2451px;height:1377px;background:#f3f1ee;transform-origin:0 0;transform:scale(0.06854);overflow:hidden;border-radius:70px"><div class="a" style="left:0;top:129px;width:59px;height:8px;border-radius:0 4px 4px 0;background:#21a99a"></div><div class="t" style="left:93.0px;top:80.3px;font:bold 91.6px 'Liberation Serif',serif;line-height:1;color:#1b2b2d;transform-origin:0 0;transform:scaleX(0.9312);">Client testimonials</div>
<div class="t" style="left:93.0px;top:194.7px;font:normal 49.4px 'Liberation Sans',sans-serif;line-height:1;color:#444444;transform-origin:0 0;transform:scaleX(0.9528);-webkit-text-stroke:0.9px #f3f1ee;">Why we do what we do</div>
<div class="a" style="left:90px;top:346px;width:705px;height:944px;background:#f4ebe7"></div><div class="a" style="left:875px;top:346px;width:705px;height:944px;background:#f4ebe7"></div><div class="a" style="left:1656px;top:346px;width:705px;height:944px;background:#f4ebe7"></div><svg class="a" style="left:0;top:0" width="2451" height="1377"><path d="M90 1041.6 C253 1089 333 1115 418 1114 C553 1113 693 1039 795 1005 L795 1290 L90 1290 Z" fill="#1b2b2d"/><path d="M875 983 C953 969 1053 979 1211 1024 C1343 1062 1473 1077 1580 1086 L1580 1290 L875 1290 Z" fill="#1b2b2d"/><path d="M1656 1081.6 C1843 1060 1983 1042 2103 1051 C2203 1059 2293 1091 2361 1114.4 L2361 1290 L1656 1290 Z" fill="#1b2b2d"/><g transform="translate(116,406) scale(1.0)" fill="#21a99a"><path d="M28.5 0 L33 4.5 C24 10 18 17 16.5 26 C26 26 34 33 34 43 C34 53 26 60 17 60 C7 60 0 52 0 43 C0 25 10 9 28.5 0 Z"/><g transform="translate(47,0)"><path d="M28.5 0 L33 4.5 C24 10 18 17 16.5 26 C26 26 34 33 34 43 C34 53 26 60 17 60 C7 60 0 52 0 43 C0 25 10 9 28.5 0 Z"/></g></g><g transform="translate(910,406) scale(1.0)" fill="#21a99a"><path d="M28.5 0 L33 4.5 C24 10 18 17 16.5 26 C26 26 34 33 34 43 C34 53 26 60 17 60 C7 60 0 52 0 43 C0 25 10 9 28.5 0 Z"/><g transform="translate(47,0)"><path d="M28.5 0 L33 4.5 C24 10 18 17 16.5 26 C26 26 34 33 34 43 C34 53 26 60 17 60 C7 60 0 52 0 43 C0 25 10 9 28.5 0 Z"/></g></g><g transform="translate(1690,406) scale(1.0)" fill="#21a99a"><path d="M28.5 0 L33 4.5 C24 10 18 17 16.5 26 C26 26 34 33 34 43 C34 53 26 60 17 60 C7 60 0 52 0 43 C0 25 10 9 28.5 0 Z"/><g transform="translate(47,0)"><path d="M28.5 0 L33 4.5 C24 10 18 17 16.5 26 C26 26 34 33 34 43 C34 53 26 60 17 60 C7 60 0 52 0 43 C0 25 10 9 28.5 0 Z"/></g></g><path d="M603.6 411 V394 L629 380 L654 394 V426 L633 436.5" fill="none" stroke="#c4ab2e" stroke-width="4.6"/><rect x="1416" y="367" width="117" height="117" fill="#7434f4"/><rect x="440" y="1137" width="30" height="29" rx="3" fill="#21a99a"/><rect x="445" y="1148" width="4.2" height="13" fill="#1b2b2d"/><circle cx="447.1" cy="1143.6" r="2.5" fill="#1b2b2d"/><path d="M452 1161v-13h4v2c1-1.6 2.6-2.4 4.6-2.4 3.4 0 4.9 2 4.9 5.6v7.8h-4.2v-7c0-1.8-.6-2.8-2.2-2.8-1.7 0-2.9 1.1-2.9 3.1v6.7z" fill="#1b2b2d"/><rect x="1124" y="1128" width="30" height="29" rx="3" fill="#21a99a"/><rect x="1129" y="1139" width="4.2" height="13" fill="#1b2b2d"/><circle cx="1131.1" cy="1134.6" r="2.5" fill="#1b2b2d"/><path d="M1136 1152v-13h4v2c1-1.6 2.6-2.4 4.6-2.4 3.4 0 4.9 2 4.9 5.6v7.8h-4.2v-7c0-1.8-.6-2.8-2.2-2.8-1.7 0-2.9 1.1-2.9 3.1v6.7z" fill="#1b2b2d"/><rect x="2069" y="1101" width="30" height="29" rx="3" fill="#21a99a"/><rect x="2074" y="1112" width="4.2" height="13" fill="#1b2b2d"/><circle cx="2076.1" cy="1107.6" r="2.5" fill="#1b2b2d"/><path d="M2081 1125v-13h4v2c1-1.6 2.6-2.4 4.6-2.4 3.4 0 4.9 2 4.9 5.6v7.8h-4.2v-7c0-1.8-.6-2.8-2.2-2.8-1.7 0-2.9 1.1-2.9 3.1v6.7z" fill="#1b2b2d"/><defs><radialGradient id="sk1" cx="0.45" cy="0.3" r="0.7"><stop offset="0" stop-color="#c78d6a"/><stop offset="0.7" stop-color="#b27756"/><stop offset="1" stop-color="#8f5a40"/></radialGradient><radialGradient id="sk3" cx="0.5" cy="0.45" r="0.65"><stop offset="0" stop-color="#d3a68a"/><stop offset="0.75" stop-color="#c39275"/><stop offset="1" stop-color="#9f7058"/></radialGradient></defs><path d="M507.0 1290.0 L521.0 1209.0 Q529.0 1172.0 561.0 1149.0 L598.0 1135.0 L693.0 1113.0 Q753.0 1145.0 795.0 1195.0 L795.0 1290.0 Z" fill="#2c2d32" /><path d="M592.0 1190.0 L604.0 1135.0 L694.0 1113.0 L718.0 1197.0 L641.0 1290.0 L581.0 1290.0 Z" fill="#1d1e29" /><path d="M606.0 1117.0 L686.0 1112.0 L679.0 1157.0 L655.0 1207.0 L623.0 1207.0 L608.0 1157.0 Z" fill="#a06b50" /><path d="M694.0 1114.0 L718.0 1197.0 L641.0 1290.0 " fill="none" stroke="#1f2025" stroke-width="3"/><path d="M604.0 1135.0 L592.0 1190.0 L586.0 1290.0 " fill="none" stroke="#1f2025" stroke-width="3"/><ellipse cx="580.5" cy="1055" rx="6.5" ry="15" fill="#a36c4d"/><ellipse cx="701" cy="1055" rx="7.5" ry="19" fill="#a36c4d"/><path d="M641.0 968.0 C679.0 968.0 699.0 995.0 699.0 1035.0 C699.0 1062.0 697.0 1079.0 692.0 1097.0 C685.0 1129.0 668.0 1152.0 633.0 1152.0 C603.0 1152.0 589.0 1127.0 585.0 1097.0 C581.0 1077.0 582.0 1057.0 582.0 1035.0 C582.0 995.0 603.0 968.0 641.0 968.0 Z" fill="url(#sk1)" /><path d="M585.0 1089.0 C590.0 1109.0 603.0 1101.0 618.0 1098.0 C633.0 1095.0 648.0 1095.0 663.0 1099.0 C678.0 1103.0 688.0 1105.0 693.0 1083.0 C692.0 1125.0 673.0 1152.0 633.0 1152.0 C601.0 1152.0 588.0 1125.0 585.0 1089.0 Z" fill="#9a958f" /><path d="M613.0 1103.0 Q641.0 1095.0 669.0 1103.0 L665.0 1109.0 Q641.0 1103.0 617.0 1109.0 Z" fill="#6e6a66" /><path d="M623.0 1113.0 Q641.0 1118.0 659.0 1113.0 " fill="none" stroke="#8a5a46" stroke-width="3"/><ellipse cx="606.5" cy="1053.5" rx="4.5" ry="3" fill="#2a1a14"/><ellipse cx="658.5" cy="1053.5" rx="4.5" ry="3" fill="#2a1a14"/><path d="M592.0 1043.0 Q606.0 1036.0 619.0 1042.0 M647.0 1042.0 Q661.0 1036.0 675.0 1043.0 " fill="none" stroke="#5a3626" stroke-width="3"/><path d="M635.0 1047.0 L629.0 1079.0 Q639.0 1085.0 649.0 1079.0 " fill="none" stroke="#99603f" stroke-width="2.5"/><path d="M1217.0 1290.0 L1217.0 1245.0 C1221.0 1222.0 1243.0 1205.0 1278.0 1191.0 L1393.0 1162.0 L1483.0 1155.0 C1533.0 1157.0 1563.0 1165.0 1580.0 1171.0 L1580.0 1290.0 Z" fill="#181a2a" /><path d="M1393.0 1187.0 L1463.0 1187.0 L1422.0 1235.0 Z" fill="#9c7f76" /><path d="M1393.0 1187.0 L1422.0 1235.0 L1463.0 1187.0 M1453.0 1199.0 L1493.0 1205.0 L1505.0 1195.0 " fill="none" stroke="#0e0f1a" stroke-width="3"/><path d="M1393.0 1197.0 L1393.0 1137.0 L1453.0 1137.0 L1455.0 1197.0 Z" fill="#b07a62" /><ellipse cx="1423" cy="1069" rx="58" ry="72" fill="#c98a72"/><path d="M1365.0 1057.0 C1361.0 1007.0 1383.0 989.0 1423.0 989.0 C1465.0 989.0 1485.0 1009.0 1481.0 1057.0 C1468.0 1027.0 1448.0 1017.0 1423.0 1017.0 C1398.0 1017.0 1378.0 1027.0 1365.0 1057.0 Z" fill="#6b5a50" /><path d="M1379.0 1067.0 L1409.0 1067.0 L1409.0 1085.0 L1379.0 1085.0 Z M1437.0 1067.0 L1467.0 1067.0 L1467.0 1085.0 L1437.0 1085.0 Z M1409.0 1073.0 L1437.0 1073.0 " fill="none" stroke="#2a2a2a" stroke-width="3"/><path d="M2093.0 1290.0 L2103.0 1232.0 C2118.0 1212.0 2148.0 1202.0 2179.0 1193.0 L2283.0 1153.0 C2313.0 1165.0 2343.0 1182.0 2361.0 1199.0 L2361.0 1290.0 Z" fill="#1a1e2b" /><path d="M2179.0 1179.0 L2283.0 1155.0 L2261.0 1290.0 L2181.0 1290.0 Z" fill="#b1c4de" /><path d="M2193.0 1167.0 L2271.0 1163.0 L2253.0 1232.0 L2223.0 1247.0 L2201.0 1217.0 Z" fill="#9f735c" /><path d="M2130.0 1107.0 C2121.0 1037.0 2138.0 979.0 2213.0 976.0 C2291.0 973.0 2305.0 1037.0 2297.0 1105.0 L2289.0 1107.0 C2285.0 1062.0 2273.0 1029.0 2215.0 1022.0 C2163.0 1027.0 2149.0 1062.0 2145.0 1107.0 Z" fill="#22232a" /><ellipse cx="2137" cy="1105" rx="7" ry="16" fill="#b3836a"/><ellipse cx="2293" cy="1102" rx="7" ry="16" fill="#b3836a"/><path d="M2147.0 1069.0 C2163.0 1032.0 2193.0 1020.0 2215.0 1020.0 C2243.0 1020.0 2278.0 1032.0 2289.0 1067.0 L2289.0 1092.0 C2287.0 1142.0 2268.0 1177.0 2233.0 1197.0 C2218.0 1202.0 2198.0 1201.0 2190.0 1195.0 C2163.0 1177.0 2145.0 1142.0 2140.0 1092.0 Z" fill="url(#sk3)" /><ellipse cx="2184" cy="1094" rx="5.5" ry="3.5" fill="#2a1c18"/><ellipse cx="2246" cy="1094" rx="5.5" ry="3.5" fill="#2a1c18"/><path d="M2171.0 1083.0 Q2184.0 1077.0 2197.0 1083.0 M2233.0 1083.0 Q2246.0 1077.0 2259.0 1083.0 " fill="none" stroke="#4a3028" stroke-width="3"/><path d="M2193.0 1155.0 Q2216.0 1164.0 2241.0 1153.0 " fill="none" stroke="#8f5f4e" stroke-width="3"/><path d="M2211.0 1102.0 L2205.0 1133.0 Q2215.0 1139.0 2227.0 1133.0 " fill="none" stroke="#a57a62" stroke-width="2.5"/><path d="M445.0 583.5 L448.0 581.9 L451.0 585.1 L454.0 581.9 L457.0 585.1 L460.0 581.9 L463.0 585.1 L466.0 581.9 L469.0 585.1 L472.0 581.9 L475.0 585.1 L478.0 581.9 L481.0 585.1 L484.0 581.9 L487.0 585.1 L490.0 581.9 L493.0 585.1 L496.0 581.9 L499.0 585.1 L502.0 581.9 L505.0 585.1 L508.0 581.9 L511.0 585.1 L514.0 581.9 L517.0 585.1 L520.0 581.9 L523.0 585.1 L526.0 581.9 L529.0 585.1 L532.0 581.9" fill="none" stroke="#e0201c" stroke-width="1.3"/><path d="M995.0 1179.5 L998.0 1177.9 L1001.0 1181.1 L1004.0 1177.9 L1007.0 1181.1 L1010.0 1177.9 L1013.0 1181.1 L1016.0 1177.9 L1019.0 1181.1 L1022.0 1177.9 L1025.0 1181.1 L1028.0 1177.9 L1031.0 1181.1 L1034.0 1177.9 L1037.0 1181.1 L1040.0 1177.9 L1043.0 1181.1 L1046.0 1177.9 L1049.0 1181.1 L1052.0 1177.9 L1055.0 1181.1 L1058.0 1177.9 L1061.0 1181.1 L1064.0 1177.9 L1067.0 1181.1 L1070.0 1177.9 L1073.0 1181.1 L1076.0 1177.9 L1079.0 1181.1 L1082.0 1177.9 L1085.0 1181.1 L1088.0 1177.9 L1091.0 1181.1 L1094.0 1177.9 L1097.0 1181.1 L1100.0 1177.9 L1103.0 1181.1 L1106.0 1177.9 L1109.0 1181.1 L1112.0 1177.9 L1115.0 1181.1" fill="none" stroke="#e0201c" stroke-width="1.3"/></svg><div class="t" style="left:542.5px;top:412.3px;font:bold 44px 'Liberation Sans',sans-serif;line-height:1;color:#0c0c0c;transform-origin:0 0;transform:scaleX(0.9782);">HEX</div>
<div class="t" style="left:542.5px;top:457.5px;font:normal 29px 'Liberation Sans',sans-serif;line-height:1;color:#808080;transform-origin:0 0;transform:scaleX(1.0107);-webkit-text-stroke:0.5px #f4ebe7;">Advisory Group</div>
<div class="t" style="left:2106.6px;top:400.6px;font:bold 25px 'Liberation Sans',sans-serif;line-height:1;color:#4a4a50;transform-origin:0 0;transform:scaleX(1.2401);">TECH</div>
<div class="t" style="left:2105.0px;top:426.1px;font:normal 35px 'Liberation Sans',sans-serif;line-height:1;color:#e31837;transform-origin:0 0;transform:scaleX(1.3912);">mahindra</div>
<div class="t" style="left:136.6px;top:518.7px;width:635.4px;font-size:30.5px;color:#3c3c3c;text-align:justify;text-align-last:justify;transform-origin:0 0;transform:scaleX(0.96);-webkit-text-stroke:0.5px #f4ebe7">HEX is built on a trusted ecosystem of long-</div>
<div class="t" style="left:136.6px;top:553.8px;width:635.4px;font-size:30.5px;color:#3c3c3c;text-align:justify;text-align-last:justify;transform-origin:0 0;transform:scaleX(0.96);-webkit-text-stroke:0.5px #f4ebe7">standing partners, and Qcept Presentations is</div>
<div class="t" style="left:136.6px;top:588.9px;width:635.4px;font-size:30.5px;color:#3c3c3c;text-align:justify;text-align-last:justify;transform-origin:0 0;transform:scaleX(0.96);-webkit-text-stroke:0.5px #f4ebe7">integral to that. Nitin has been my go-to</div>
<div class="t" style="left:136.6px;top:624.0px;width:635.4px;font-size:30.5px;color:#3c3c3c;text-align:justify;text-align-last:justify;transform-origin:0 0;transform:scaleX(0.96);-webkit-text-stroke:0.5px #f4ebe7">expert for visual storytelling since the mid-</div>
<div class="t" style="left:136.6px;top:659.1px;width:635.4px;font-size:30.5px;color:#3c3c3c;text-align:justify;text-align-last:justify;transform-origin:0 0;transform:scaleX(0.96);-webkit-text-stroke:0.5px #f4ebe7">2000s, making it an instinctive choice to</div>
<div class="t" style="left:136.6px;top:694.2px;width:635.4px;font-size:30.5px;color:#3c3c3c;text-align:justify;text-align-last:justify;transform-origin:0 0;transform:scaleX(0.96);-webkit-text-stroke:0.5px #f4ebe7">have him shape HEX’s visual identity. More</div>
<div class="t" style="left:136.6px;top:729.3px;width:635.4px;font-size:30.5px;color:#3c3c3c;text-align:justify;text-align-last:justify;transform-origin:0 0;transform:scaleX(0.96);-webkit-text-stroke:0.5px #f4ebe7">than just a vendor, Qcept collaborates</div>
<div class="t" style="left:136.6px;top:764.4px;width:635.4px;font-size:30.5px;color:#3c3c3c;text-align:justify;text-align-last:justify;transform-origin:0 0;transform:scaleX(0.96);-webkit-text-stroke:0.5px #f4ebe7">seamlessly with HEX’s strategic marketing</div>
<div class="t" style="left:136.6px;top:799.5px;width:635.4px;font-size:30.5px;color:#3c3c3c;text-align:justify;text-align-last:justify;transform-origin:0 0;transform:scaleX(0.96);-webkit-text-stroke:0.5px #f4ebe7">partners like SBDA, ensuring a unified</div>
<div class="t" style="left:136.6px;top:834.6px;width:635.4px;font-size:30.5px;color:#3c3c3c;text-align:justify;text-align-last:justify;transform-origin:0 0;transform:scaleX(0.96);-webkit-text-stroke:0.5px #f4ebe7">approach to our brand. Their commitment</div>
<div class="t" style="left:136.6px;top:869.7px;width:635.4px;font-size:30.5px;color:#3c3c3c;text-align:justify;text-align-last:justify;transform-origin:0 0;transform:scaleX(0.96);-webkit-text-stroke:0.5px #f4ebe7">and partnership go far beyond transactions—</div>
<div class="t" style="left:136.6px;top:904.8px;width:635.4px;font-size:30.5px;color:#3c3c3c;text-align:justify;text-align-last:justify;transform-origin:0 0;transform:scaleX(0.96);-webkit-text-stroke:0.5px #f4ebe7">ours is a relationship rooted in trust and</div>
<div class="t" style="left:136.6px;top:939.9px;font-size:30.5px;color:#3c3c3c;transform-origin:0 0;transform:scaleX(0.9538);-webkit-text-stroke:0.5px #f4ebe7">shared success.</div><div class="t" style="left:922.0px;top:516.2px;width:634.4px;font-size:30.5px;color:#3c3c3c;text-align:justify;text-align-last:justify;transform-origin:0 0;transform:scaleX(0.96);-webkit-text-stroke:0.5px #f4ebe7">As a CEO, I look for partners who consistently</div>
<div class="t" style="left:922.0px;top:549.8px;width:634.4px;font-size:30.5px;color:#3c3c3c;text-align:justify;text-align-last:justify;transform-origin:0 0;transform:scaleX(0.96);-webkit-text-stroke:0.5px #f4ebe7">deliver consistently high quality work and who</div>
<div class="t" style="left:922.0px;top:583.5px;width:634.4px;font-size:30.5px;color:#3c3c3c;text-align:justify;text-align-last:justify;transform-origin:0 0;transform:scaleX(0.96);-webkit-text-stroke:0.5px #f4ebe7">allow my team to operate at speed. Qcept</div>
<div class="t" style="left:922.0px;top:617.1px;width:634.4px;font-size:30.5px;color:#3c3c3c;text-align:justify;text-align-last:justify;transform-origin:0 0;transform:scaleX(0.96);-webkit-text-stroke:0.5px #f4ebe7">has become exactly that partner, letting us</div>
<div class="t" style="left:922.0px;top:650.8px;width:634.4px;font-size:30.5px;color:#3c3c3c;text-align:justify;text-align-last:justify;transform-origin:0 0;transform:scaleX(0.96);-webkit-text-stroke:0.5px #f4ebe7">speak for themselves with</div>
<div class="t" style="left:922.0px;top:684.4px;width:634.4px;font-size:30.5px;color:#3c3c3c;text-align:justify;text-align-last:justify;transform-origin:0 0;transform:scaleX(0.96);-webkit-text-stroke:0.5px #f4ebe7">deliverables that elevate our brand and match</div>
<div class="t" style="left:922.0px;top:718.1px;width:634.4px;font-size:30.5px;color:#3c3c3c;text-align:justify;text-align-last:justify;transform-origin:0 0;transform:scaleX(0.96);-webkit-text-stroke:0.5px #f4ebe7">our pace of execution. They bring</div>
<div class="t" style="left:922.0px;top:751.7px;width:634.4px;font-size:30.5px;color:#3c3c3c;text-align:justify;text-align-last:justify;transform-origin:0 0;transform:scaleX(0.96);-webkit-text-stroke:0.5px #f4ebe7">a rare combination of speed, accuracy and</div>
<div class="t" style="left:922.0px;top:785.4px;width:634.4px;font-size:30.5px;color:#3c3c3c;text-align:justify;text-align-last:justify;transform-origin:0 0;transform:scaleX(0.96);-webkit-text-stroke:0.5px #f4ebe7">creative precision to exacting</div>
<div class="t" style="left:922.0px;top:819.0px;width:634.4px;font-size:30.5px;color:#3c3c3c;text-align:justify;text-align-last:justify;transform-origin:0 0;transform:scaleX(0.96);-webkit-text-stroke:0.5px #f4ebe7">standards, integrating seamlessly with</div>
<div class="t" style="left:922.0px;top:852.7px;width:634.4px;font-size:30.5px;color:#3c3c3c;text-align:justify;text-align-last:justify;transform-origin:0 0;transform:scaleX(0.96);-webkit-text-stroke:0.5px #f4ebe7">workflows, and enable my team to focus on</div>
<div class="t" style="left:922.0px;top:886.3px;width:634.4px;font-size:30.5px;color:#3c3c3c;text-align:justify;text-align-last:justify;transform-origin:0 0;transform:scaleX(0.96);-webkit-text-stroke:0.5px #f4ebe7">what matters most—our clients. That kind</div>
<div class="t" style="left:922.0px;top:920.0px;font-size:30.5px;color:#3c3c3c;transform-origin:0 0;transform:scaleX(0.6075);-webkit-text-stroke:0.5px #f4ebe7">of support is invaluable to us.</div><div class="t" style="left:1711.6px;top:517.2px;width:627.1px;font-size:30.5px;color:#3c3c3c;text-align:justify;text-align-last:justify;transform-origin:0 0;transform:scaleX(0.96);-webkit-text-stroke:0.5px #f4ebe7">I wanted to commend Qcept team for the</div>
<div class="t" style="left:1711.6px;top:552.4px;width:627.1px;font-size:30.5px;color:#3c3c3c;text-align:justify;text-align-last:justify;transform-origin:0 0;transform:scaleX(0.96);-webkit-text-stroke:0.5px #f4ebe7">high quality professional work you have</div>
<div class="t" style="left:1711.6px;top:587.6px;width:627.1px;font-size:30.5px;color:#3c3c3c;text-align:justify;text-align-last:justify;transform-origin:0 0;transform:scaleX(0.96);-webkit-text-stroke:0.5px #f4ebe7">delivered for us. The customer is a Fortune</div>
<div class="t" style="left:1711.6px;top:622.8px;width:627.1px;font-size:30.5px;color:#3c3c3c;text-align:justify;text-align-last:justify;transform-origin:0 0;transform:scaleX(0.96);-webkit-text-stroke:0.5px #f4ebe7">50 one and it was important that your team</div>
<div class="t" style="left:1711.6px;top:658.0px;width:627.1px;font-size:30.5px;color:#3c3c3c;text-align:justify;text-align-last:justify;transform-origin:0 0;transform:scaleX(0.96);-webkit-text-stroke:0.5px #f4ebe7">understood the needs and produced</div>
<div class="t" style="left:1711.6px;top:693.2px;width:627.1px;font-size:30.5px;color:#3c3c3c;text-align:justify;text-align-last:justify;transform-origin:0 0;transform:scaleX(0.96);-webkit-text-stroke:0.5px #f4ebe7">collaterals that were professional, balanced</div>
<div class="t" style="left:1711.6px;top:728.4px;width:627.1px;font-size:30.5px;color:#3c3c3c;text-align:justify;text-align-last:justify;transform-origin:0 0;transform:scaleX(0.96);-webkit-text-stroke:0.5px #f4ebe7">and delivered the key messages without</div>
<div class="t" style="left:1711.6px;top:763.6px;width:627.1px;font-size:30.5px;color:#3c3c3c;text-align:justify;text-align-last:justify;transform-origin:0 0;transform:scaleX(0.96);-webkit-text-stroke:0.5px #f4ebe7">going overboard. I think the team did exactly</div>
<div class="t" style="left:1711.6px;top:798.8px;width:627.1px;font-size:30.5px;color:#3c3c3c;text-align:justify;text-align-last:justify;transform-origin:0 0;transform:scaleX(0.96);-webkit-text-stroke:0.5px #f4ebe7">that. Thank you for the partnership and we</div>
<div class="t" style="left:1711.6px;top:834.0px;width:627.1px;font-size:30.5px;color:#3c3c3c;text-align:justify;text-align-last:justify;transform-origin:0 0;transform:scaleX(0.96);-webkit-text-stroke:0.5px #f4ebe7">look forward to working with you folks in</div>
<div class="t" style="left:1711.6px;top:869.2px;font-size:30.5px;color:#3c3c3c;transform-origin:0 0;transform:scaleX(1.0067);-webkit-text-stroke:0.5px #f4ebe7">future opportunities.</div><div class="t" style="left:136.0px;top:1141.8px;font:bold 42px 'Liberation Serif',serif;line-height:1;color:#ffffff;transform-origin:0 0;transform:scaleX(0.9728);">Sarthak Brahma</div>
<div class="t" style="left:136.0px;top:1190.5px;font:normal 29px 'Liberation Sans',sans-serif;line-height:1;color:#ffffff;transform-origin:0 0;transform:scaleX(0.9738);-webkit-text-stroke:0.5px #1b2b2d;">CEO and Managing Partner</div>
<div class="t" style="left:914.6px;top:1136.8px;font:bold 42px 'Liberation Serif',serif;line-height:1;color:#ffffff;transform-origin:0 0;transform:scaleX(0.9876);">Phil Fersht</div>
<div class="t" style="left:914.6px;top:1185.5px;font:normal 29px 'Liberation Sans',sans-serif;line-height:1;color:#ffffff;transform-origin:0 0;transform:scaleX(0.9777);-webkit-text-stroke:0.5px #1b2b2d;">CEO and Chief Analyst</div>
<div class="t" style="left:1679.0px;top:1113.8px;font:bold 42px 'Liberation Serif',serif;line-height:1;color:#ffffff;transform-origin:0 0;transform:scaleX(0.9780);">Anirban Chakrabarti</div>
<div class="t" style="left:1679.0px;top:1162.3px;font:normal 28.5px 'Liberation Sans',sans-serif;line-height:1;color:#ffffff;transform-origin:0 0;-webkit-text-stroke:0.5px #1b2b2d;">Head of End User Compute and</div>
<div class="t" style="left:1679.0px;top:1196.4px;font:normal 28.5px 'Liberation Sans',sans-serif;line-height:1;color:#ffffff;transform-origin:0 0;transform:scaleX(1.0198);-webkit-text-stroke:0.5px #1b2b2d;">Workspace Transformation –</div>
<div class="t" style="left:1679.0px;top:1230.5px;font:normal 28.5px 'Liberation Sans',sans-serif;line-height:1;color:#ffffff;transform-origin:0 0;transform:scaleX(1.0223);-webkit-text-stroke:0.5px #1b2b2d;">North America</div>
<div class="t" style="left:90.0px;top:1316.1px;font:normal 24.7px 'Liberation Sans',sans-serif;line-height:1;color:#8c8c8c;transform-origin:0 0;transform:scaleX(0.9542);">© 2025, Qcept Presentations Pvt. Ltd.</div>
<div class="t" style="left:2354.7px;top:1317.0px;font:normal 23px 'Liberation Sans',sans-serif;line-height:1;color:#8c8c8c;transform-origin:0 0;">1</div>
</div><div class="a" style="left:307px;top:283px;width:2451px;height:1377px;background:#f3f1ee;box-shadow:0 0 0 1px rgba(0,0,0,0.07),0 4px 28px rgba(0,0,0,0.11);overflow:hidden"><div class="a" style="left:0;top:129px;width:59px;height:8px;border-radius:0 4px 4px 0;background:#21a99a"></div><div class="t" style="left:93.0px;top:80.3px;font:bold 91.6px 'Liberation Serif',serif;line-height:1;color:#1b2b2d;transform-origin:0 0;transform:scaleX(0.9312);">Client testimonials</div>
<div class="t" style="left:93.0px;top:194.7px;font:normal 49.4px 'Liberation Sans',sans-serif;line-height:1;color:#444444;transform-origin:0 0;transform:scaleX(0.9528);-webkit-text-stroke:0.9px #f3f1ee;">Why we do what we do</div>
<div class="a" style="left:90px;top:346px;width:705px;height:944px;background:#f4ebe7"></div><div class="a" style="left:875px;top:346px;width:705px;height:944px;background:#f4ebe7"></div><div class="a" style="left:1656px;top:346px;width:705px;height:944px;background:#f4ebe7"></div><svg class="a" style="left:0;top:0" width="2451" height="1377"><path d="M90 1041.6 C253 1089 333 1115 418 1114 C553 1113 693 1039 795 1005 L795 1290 L90 1290 Z" fill="#1b2b2d"/><path d="M875 983 C953 969 1053 979 1211 1024 C1343 1062 1473 1077 1580 1086 L1580 1290 L875 1290 Z" fill="#1b2b2d"/><path d="M1656 1081.6 C1843 1060 1983 1042 2103 1051 C2203 1059 2293 1091 2361 1114.4 L2361 1290 L1656 1290 Z" fill="#1b2b2d"/><g transform="translate(116,406) scale(1.0)" fill="#21a99a"><path d="M28.5 0 L33 4.5 C24 10 18 17 16.5 26 C26 26 34 33 34 43 C34 53 26 60 17 60 C7 60 0 52 0 43 C0 25 10 9 28.5 0 Z"/><g transform="translate(47,0)"><path d="M28.5 0 L33 4.5 C24 10 18 17 16.5 26 C26 26 34 33 34 43 C34 53 26 60 17 60 C7 60 0 52 0 43 C0 25 10 9 28.5 0 Z"/></g></g><g transform="translate(910,406) scale(1.0)" fill="#21a99a"><path d="M28.5 0 L33 4.5 C24 10 18 17 16.5 26 C26 26 34 33 34 43 C34 53 26 60 17 60 C7 60 0 52 0 43 C0 25 10 9 28.5 0 Z"/><g transform="translate(47,0)"><path d="M28.5 0 L33 4.5 C24 10 18 17 16.5 26 C26 26 34 33 34 43 C34 53 26 60 17 60 C7 60 0 52 0 43 C0 25 10 9 28.5 0 Z"/></g></g><g transform="translate(1690,406) scale(1.0)" fill="#21a99a"><path d="M28.5 0 L33 4.5 C24 10 18 17 16.5 26 C26 26 34 33 34 43 C34 53 26 60 17 60 C7 60 0 52 0 43 C0 25 10 9 28.5 0 Z"/><g transform="translate(47,0)"><path d="M28.5 0 L33 4.5 C24 10 18 17 16.5 26 C26 26 34 33 34 43 C34 53 26 60 17 60 C7 60 0 52 0 43 C0 25 10 9 28.5 0 Z"/></g></g><path d="M603.6 411 V394 L629 380 L654 394 V426 L633 436.5" fill="none" stroke="#c4ab2e" stroke-width="4.6"/><rect x="1416" y="367" width="117" height="117" fill="#7434f4"/><rect x="440" y="1137" width="30" height="29" rx="3" fill="#21a99a"/><rect x="445" y="1148" width="4.2" height="13" fill="#1b2b2d"/><circle cx="447.1" cy="1143.6" r="2.5" fill="#1b2b2d"/><path d="M452 1161v-13h4v2c1-1.6 2.6-2.4 4.6-2.4 3.4 0 4.9 2 4.9 5.6v7.8h-4.2v-7c0-1.8-.6-2.8-2.2-2.8-1.7 0-2.9 1.1-2.9 3.1v6.7z" fill="#1b2b2d"/><rect x="1124" y="1128" width="30" height="29" rx="3" fill="#21a99a"/><rect x="1129" y="1139" width="4.2" height="13" fill="#1b2b2d"/><circle cx="1131.1" cy="1134.6" r="2.5" fill="#1b2b2d"/><path d="M1136 1152v-13h4v2c1-1.6 2.6-2.4 4.6-2.4 3.4 0 4.9 2 4.9 5.6v7.8h-4.2v-7c0-1.8-.6-2.8-2.2-2.8-1.7 0-2.9 1.1-2.9 3.1v6.7z" fill="#1b2b2d"/><rect x="2069" y="1101" width="30" height="29" rx="3" fill="#21a99a"/><rect x="2074" y="1112" width="4.2" height="13" fill="#1b2b2d"/><circle cx="2076.1" cy="1107.6" r="2.5" fill="#1b2b2d"/><path d="M2081 1125v-13h4v2c1-1.6 2.6-2.4 4.6-2.4 3.4 0 4.9 2 4.9 5.6v7.8h-4.2v-7c0-1.8-.6-2.8-2.2-2.8-1.7 0-2.9 1.1-2.9 3.1v6.7z" fill="#1b2b2d"/><defs><radialGradient id="sk1" cx="0.45" cy="0.3" r="0.7"><stop offset="0" stop-color="#c78d6a"/><stop offset="0.7" stop-color="#b27756"/><stop offset="1" stop-color="#8f5a40"/></radialGradient><radialGradient id="sk3" cx="0.5" cy="0.45" r="0.65"><stop offset="0" stop-color="#d3a68a"/><stop offset="0.75" stop-color="#c39275"/><stop offset="1" stop-color="#9f7058"/></radialGradient></defs><path d="M507.0 1290.0 L521.0 1209.0 Q529.0 1172.0 561.0 1149.0 L598.0 1135.0 L693.0 1113.0 Q753.0 1145.0 795.0 1195.0 L795.0 1290.0 Z" fill="#2c2d32" /><path d="M592.0 1190.0 L604.0 1135.0 L694.0 1113.0 L718.0 1197.0 L641.0 1290.0 L581.0 1290.0 Z" fill="#1d1e29" /><path d="M606.0 1117.0 L686.0 1112.0 L679.0 1157.0 L655.0 1207.0 L623.0 1207.0 L608.0 1157.0 Z" fill="#a06b50" /><path d="M694.0 1114.0 L718.0 1197.0 L641.0 1290.0 " fill="none" stroke="#1f2025" stroke-width="3"/><path d="M604.0 1135.0 L592.0 1190.0 L586.0 1290.0 " fill="none" stroke="#1f2025" stroke-width="3"/><ellipse cx="580.5" cy="1055" rx="6.5" ry="15" fill="#a36c4d"/><ellipse cx="701" cy="1055" rx="7.5" ry="19" fill="#a36c4d"/><path d="M641.0 968.0 C679.0 968.0 699.0 995.0 699.0 1035.0 C699.0 1062.0 697.0 1079.0 692.0 1097.0 C685.0 1129.0 668.0 1152.0 633.0 1152.0 C603.0 1152.0 589.0 1127.0 585.0 1097.0 C581.0 1077.0 582.0 1057.0 582.0 1035.0 C582.0 995.0 603.0 968.0 641.0 968.0 Z" fill="url(#sk1)" /><path d="M585.0 1089.0 C590.0 1109.0 603.0 1101.0 618.0 1098.0 C633.0 1095.0 648.0 1095.0 663.0 1099.0 C678.0 1103.0 688.0 1105.0 693.0 1083.0 C692.0 1125.0 673.0 1152.0 633.0 1152.0 C601.0 1152.0 588.0 1125.0 585.0 1089.0 Z" fill="#9a958f" /><path d="M613.0 1103.0 Q641.0 1095.0 669.0 1103.0 L665.0 1109.0 Q641.0 1103.0 617.0 1109.0 Z" fill="#6e6a66" /><path d="M623.0 1113.0 Q641.0 1118.0 659.0 1113.0 " fill="none" stroke="#8a5a46" stroke-width="3"/><ellipse cx="606.5" cy="1053.5" rx="4.5" ry="3" fill="#2a1a14"/><ellipse cx="658.5" cy="1053.5" rx="4.5" ry="3" fill="#2a1a14"/><path d="M592.0 1043.0 Q606.0 1036.0 619.0 1042.0 M647.0 1042.0 Q661.0 1036.0 675.0 1043.0 " fill="none" stroke="#5a3626" stroke-width="3"/><path d="M635.0 1047.0 L629.0 1079.0 Q639.0 1085.0 649.0 1079.0 " fill="none" stroke="#99603f" stroke-width="2.5"/><path d="M1217.0 1290.0 L1217.0 1245.0 C1221.0 1222.0 1243.0 1205.0 1278.0 1191.0 L1393.0 1162.0 L1483.0 1155.0 C1533.0 1157.0 1563.0 1165.0 1580.0 1171.0 L1580.0 1290.0 Z" fill="#181a2a" /><path d="M1393.0 1187.0 L1463.0 1187.0 L1422.0 1235.0 Z" fill="#9c7f76" /><path d="M1393.0 1187.0 L1422.0 1235.0 L1463.0 1187.0 M1453.0 1199.0 L1493.0 1205.0 L1505.0 1195.0 " fill="none" stroke="#0e0f1a" stroke-width="3"/><path d="M1393.0 1197.0 L1393.0 1137.0 L1453.0 1137.0 L1455.0 1197.0 Z" fill="#b07a62" /><ellipse cx="1423" cy="1069" rx="58" ry="72" fill="#c98a72"/><path d="M1365.0 1057.0 C1361.0 1007.0 1383.0 989.0 1423.0 989.0 C1465.0 989.0 1485.0 1009.0 1481.0 1057.0 C1468.0 1027.0 1448.0 1017.0 1423.0 1017.0 C1398.0 1017.0 1378.0 1027.0 1365.0 1057.0 Z" fill="#6b5a50" /><path d="M1379.0 1067.0 L1409.0 1067.0 L1409.0 1085.0 L1379.0 1085.0 Z M1437.0 1067.0 L1467.0 1067.0 L1467.0 1085.0 L1437.0 1085.0 Z M1409.0 1073.0 L1437.0 1073.0 " fill="none" stroke="#2a2a2a" stroke-width="3"/><path d="M2093.0 1290.0 L2103.0 1232.0 C2118.0 1212.0 2148.0 1202.0 2179.0 1193.0 L2283.0 1153.0 C2313.0 1165.0 2343.0 1182.0 2361.0 1199.0 L2361.0 1290.0 Z" fill="#1a1e2b" /><path d="M2179.0 1179.0 L2283.0 1155.0 L2261.0 1290.0 L2181.0 1290.0 Z" fill="#b1c4de" /><path d="M2193.0 1167.0 L2271.0 1163.0 L2253.0 1232.0 L2223.0 1247.0 L2201.0 1217.0 Z" fill="#9f735c" /><path d="M2130.0 1107.0 C2121.0 1037.0 2138.0 979.0 2213.0 976.0 C2291.0 973.0 2305.0 1037.0 2297.0 1105.0 L2289.0 1107.0 C2285.0 1062.0 2273.0 1029.0 2215.0 1022.0 C2163.0 1027.0 2149.0 1062.0 2145.0 1107.0 Z" fill="#22232a" /><ellipse cx="2137" cy="1105" rx="7" ry="16" fill="#b3836a"/><ellipse cx="2293" cy="1102" rx="7" ry="16" fill="#b3836a"/><path d="M2147.0 1069.0 C2163.0 1032.0 2193.0 1020.0 2215.0 1020.0 C2243.0 1020.0 2278.0 1032.0 2289.0 1067.0 L2289.0 1092.0 C2287.0 1142.0 2268.0 1177.0 2233.0 1197.0 C2218.0 1202.0 2198.0 1201.0 2190.0 1195.0 C2163.0 1177.0 2145.0 1142.0 2140.0 1092.0 Z" fill="url(#sk3)" /><ellipse cx="2184" cy="1094" rx="5.5" ry="3.5" fill="#2a1c18"/><ellipse cx="2246" cy="1094" rx="5.5" ry="3.5" fill="#2a1c18"/><path d="M2171.0 1083.0 Q2184.0 1077.0 2197.0 1083.0 M2233.0 1083.0 Q2246.0 1077.0 2259.0 1083.0 " fill="none" stroke="#4a3028" stroke-width="3"/><path d="M2193.0 1155.0 Q2216.0 1164.0 2241.0 1153.0 " fill="none" stroke="#8f5f4e" stroke-width="3"/><path d="M2211.0 1102.0 L2205.0 1133.0 Q2215.0 1139.0 2227.0 1133.0 " fill="none" stroke="#a57a62" stroke-width="2.5"/><path d="M445.0 583.5 L448.0 581.9 L451.0 585.1 L454.0 581.9 L457.0 585.1 L460.0 581.9 L463.0 585.1 L466.0 581.9 L469.0 585.1 L472.0 581.9 L475.0 585.1 L478.0 581.9 L481.0 585.1 L484.0 581.9 L487.0 585.1 L490.0 581.9 L493.0 585.1 L496.0 581.9 L499.0 585.1 L502.0 581.9 L505.0 585.1 L508.0 581.9 L511.0 585.1 L514.0 581.9 L517.0 585.1 L520.0 581.9 L523.0 585.1 L526.0 581.9 L529.0 585.1 L532.0 581.9" fill="none" stroke="#e0201c" stroke-width="1.3"/><path d="M995.0 1179.5 L998.0 1177.9 L1001.0 1181.1 L1004.0 1177.9 L1007.0 1181.1 L1010.0 1177.9 L1013.0 1181.1 L1016.0 1177.9 L1019.0 1181.1 L1022.0 1177.9 L1025.0 1181.1 L1028.0 1177.9 L1031.0 1181.1 L1034.0 1177.9 L1037.0 1181.1 L1040.0 1177.9 L1043.0 1181.1 L1046.0 1177.9 L1049.0 1181.1 L1052.0 1177.9 L1055.0 1181.1 L1058.0 1177.9 L1061.0 1181.1 L1064.0 1177.9 L1067.0 1181.1 L1070.0 1177.9 L1073.0 1181.1 L1076.0 1177.9 L1079.0 1181.1 L1082.0 1177.9 L1085.0 1181.1 L1088.0 1177.9 L1091.0 1181.1 L1094.0 1177.9 L1097.0 1181.1 L1100.0 1177.9 L1103.0 1181.1 L1106.0 1177.9 L1109.0 1181.1 L1112.0 1177.9 L1115.0 1181.1" fill="none" stroke="#e0201c" stroke-width="1.3"/></svg><div class="t" style="left:542.5px;top:412.3px;font:bold 44px 'Liberation Sans',sans-serif;line-height:1;color:#0c0c0c;transform-origin:0 0;transform:scaleX(0.9782);">HEX</div>
<div class="t" style="left:542.5px;top:457.5px;font:normal 29px 'Liberation Sans',sans-serif;line-height:1;color:#808080;transform-origin:0 0;transform:scaleX(1.0107);-webkit-text-stroke:0.5px #f4ebe7;">Advisory Group</div>
<div class="t" style="left:2106.6px;top:400.6px;font:bold 25px 'Liberation Sans',sans-serif;line-height:1;color:#4a4a50;transform-origin:0 0;transform:scaleX(1.2401);">TECH</div>
<div class="t" style="left:2105.0px;top:426.1px;font:normal 35px 'Liberation Sans',sans-serif;line-height:1;color:#e31837;transform-origin:0 0;transform:scaleX(1.3912);">mahindra</div>
<div class="t" style="left:136.6px;top:518.7px;width:635.4px;font-size:30.5px;color:#3c3c3c;text-align:justify;text-align-last:justify;transform-origin:0 0;transform:scaleX(0.96);-webkit-text-stroke:0.5px #f4ebe7">HEX is built on a trusted ecosystem of long-</div>
<div class="t" style="left:136.6px;top:553.8px;width:635.4px;font-size:30.5px;color:#3c3c3c;text-align:justify;text-align-last:justify;transform-origin:0 0;transform:scaleX(0.96);-webkit-text-stroke:0.5px #f4ebe7">standing partners, and Qcept Presentations is</div>
<div class="t" style="left:136.6px;top:588.9px;width:635.4px;font-size:30.5px;color:#3c3c3c;text-align:justify;text-align-last:justify;transform-origin:0 0;transform:scaleX(0.96);-webkit-text-stroke:0.5px #f4ebe7">integral to that. Nitin has been my go-to</div>
<div class="t" style="left:136.6px;top:624.0px;width:635.4px;font-size:30.5px;color:#3c3c3c;text-align:justify;text-align-last:justify;transform-origin:0 0;transform:scaleX(0.96);-webkit-text-stroke:0.5px #f4ebe7">expert for visual storytelling since the mid-</div>
<div class="t" style="left:136.6px;top:659.1px;width:635.4px;font-size:30.5px;color:#3c3c3c;text-align:justify;text-align-last:justify;transform-origin:0 0;transform:scaleX(0.96);-webkit-text-stroke:0.5px #f4ebe7">2000s, making it an instinctive choice to</div>
<div class="t" style="left:136.6px;top:694.2px;width:635.4px;font-size:30.5px;color:#3c3c3c;text-align:justify;text-align-last:justify;transform-origin:0 0;transform:scaleX(0.96);-webkit-text-stroke:0.5px #f4ebe7">have him shape HEX’s visual identity. More</div>
<div class="t" style="left:136.6px;top:729.3px;width:635.4px;font-size:30.5px;color:#3c3c3c;text-align:justify;text-align-last:justify;transform-origin:0 0;transform:scaleX(0.96);-webkit-text-stroke:0.5px #f4ebe7">than just a vendor, Qcept collaborates</div>
<div class="t" style="left:136.6px;top:764.4px;width:635.4px;font-size:30.5px;color:#3c3c3c;text-align:justify;text-align-last:justify;transform-origin:0 0;transform:scaleX(0.96);-webkit-text-stroke:0.5px #f4ebe7">seamlessly with HEX’s strategic marketing</div>
<div class="t" style="left:136.6px;top:799.5px;width:635.4px;font-size:30.5px;color:#3c3c3c;text-align:justify;text-align-last:justify;transform-origin:0 0;transform:scaleX(0.96);-webkit-text-stroke:0.5px #f4ebe7">partners like SBDA, ensuring a unified</div>
<div class="t" style="left:136.6px;top:834.6px;width:635.4px;font-size:30.5px;color:#3c3c3c;text-align:justify;text-align-last:justify;transform-origin:0 0;transform:scaleX(0.96);-webkit-text-stroke:0.5px #f4ebe7">approach to our brand. Their commitment</div>
<div class="t" style="left:136.6px;top:869.7px;width:635.4px;font-size:30.5px;color:#3c3c3c;text-align:justify;text-align-last:justify;transform-origin:0 0;transform:scaleX(0.96);-webkit-text-stroke:0.5px #f4ebe7">and partnership go far beyond transactions—</div>
<div class="t" style="left:136.6px;top:904.8px;width:635.4px;font-size:30.5px;color:#3c3c3c;text-align:justify;text-align-last:justify;transform-origin:0 0;transform:scaleX(0.96);-webkit-text-stroke:0.5px #f4ebe7">ours is a relationship rooted in trust and</div>
<div class="t" style="left:136.6px;top:939.9px;font-size:30.5px;color:#3c3c3c;transform-origin:0 0;transform:scaleX(0.9538);-webkit-text-stroke:0.5px #f4ebe7">shared success.</div><div class="t" style="left:922.3px;top:516.2px;font-size:30.5px;color:#3c3c3c;transform-origin:0 0;transform:scaleX(0.9);-webkit-text-stroke:0.5px #f4ebe7">As</div>
<div class="t" style="left:971.0px;top:516.2px;font-size:30.5px;color:#3c3c3c;transform-origin:0 0;transform:scaleX(0.9);-webkit-text-stroke:0.5px #f4ebe7">a</div>
<div class="t" style="left:1000.4px;top:516.2px;font-size:30.5px;color:#3c3c3c;transform-origin:0 0;transform:scaleX(0.9);-webkit-text-stroke:0.5px #f4ebe7">CEO,</div>
<div class="t" style="left:1083.7px;top:516.2px;font-size:30.5px;color:#3c3c3c;transform-origin:0 0;transform:scaleX(0.9);-webkit-text-stroke:0.5px #f4ebe7">I</div>
<div class="t" style="left:1108.0px;top:516.2px;font-size:30.5px;color:#3c3c3c;transform-origin:0 0;transform:scaleX(0.9);-webkit-text-stroke:0.5px #f4ebe7">look</div>
<div class="t" style="left:1176.8px;top:516.2px;font-size:30.5px;color:#3c3c3c;transform-origin:0 0;transform:scaleX(0.9);-webkit-text-stroke:0.5px #f4ebe7">for</div>
<div class="t" style="left:922.0px;top:549.8px;font-size:30.5px;color:#3c3c3c;transform-origin:0 0;transform:scaleX(0.9);-webkit-text-stroke:0.5px #f4ebe7">deliver</div>
<div class="t" style="left:1020.6px;top:549.8px;font-size:30.5px;color:#3c3c3c;transform-origin:0 0;transform:scaleX(0.9);-webkit-text-stroke:0.5px #f4ebe7">consistently</div>
<div class="t" style="left:1186.0px;top:549.8px;font-size:30.5px;color:#3c3c3c;transform-origin:0 0;transform:scaleX(0.9);-webkit-text-stroke:0.5px #f4ebe7">high</div>
<div class="t" style="left:922.0px;top:583.5px;font-size:30.5px;color:#3c3c3c;transform-origin:0 0;transform:scaleX(0.9);-webkit-text-stroke:0.5px #f4ebe7">allow</div>
<div class="t" style="left:998.7px;top:583.5px;font-size:30.5px;color:#3c3c3c;transform-origin:0 0;transform:scaleX(0.9);-webkit-text-stroke:0.5px #f4ebe7">my</div>
<div class="t" style="left:1050.0px;top:583.5px;font-size:30.5px;color:#3c3c3c;transform-origin:0 0;transform:scaleX(0.9);-webkit-text-stroke:0.5px #f4ebe7">team</div>
<div class="t" style="left:1127.0px;top:583.5px;font-size:30.5px;color:#3c3c3c;transform-origin:0 0;transform:scaleX(0.9);-webkit-text-stroke:0.5px #f4ebe7">to</div>
<div class="t" style="left:1163.6px;top:583.5px;font-size:30.5px;color:#3c3c3c;transform-origin:0 0;transform:scaleX(0.9);-webkit-text-stroke:0.5px #f4ebe7">operate</div>
<div class="t" style="left:922.0px;top:617.1px;font-size:30.5px;color:#3c3c3c;transform-origin:0 0;transform:scaleX(0.9);-webkit-text-stroke:0.5px #f4ebe7">has</div>
<div class="t" style="left:983.8px;top:617.1px;font-size:30.5px;color:#3c3c3c;transform-origin:0 0;transform:scaleX(0.9);-webkit-text-stroke:0.5px #f4ebe7">become</div>
<div class="t" style="left:1106.3px;top:617.1px;font-size:30.5px;color:#3c3c3c;transform-origin:0 0;transform:scaleX(0.9);-webkit-text-stroke:0.5px #f4ebe7">exactly</div>
<div class="t" style="left:922.0px;top:650.8px;font-size:30.5px;color:#3c3c3c;transform-origin:0 0;transform:scaleX(0.9);-webkit-text-stroke:0.5px #f4ebe7">speak</div>
<div class="t" style="left:1045.6px;top:650.8px;font-size:30.5px;color:#3c3c3c;transform-origin:0 0;transform:scaleX(0.9);-webkit-text-stroke:0.5px #f4ebe7">for</div>
<div class="t" style="left:1131.6px;top:650.8px;font-size:30.5px;color:#3c3c3c;transform-origin:0 0;transform:scaleX(0.9);-webkit-text-stroke:0.5px #f4ebe7">themselves</div>
<div class="t" style="left:922.0px;top:684.4px;font-size:30.5px;color:#3c3c3c;transform-origin:0 0;transform:scaleX(0.9);-webkit-text-stroke:0.5px #f4ebe7">deliverables</div>
<div class="t" style="left:1083.7px;top:684.4px;font-size:30.5px;color:#3c3c3c;transform-origin:0 0;transform:scaleX(0.9);-webkit-text-stroke:0.5px #f4ebe7">that</div>
<div class="t" style="left:1142.0px;top:684.4px;font-size:30.5px;color:#3c3c3c;transform-origin:0 0;transform:scaleX(0.9);-webkit-text-stroke:0.5px #f4ebe7">elevate</div>
<div class="t" style="left:922.2px;top:718.1px;font-size:30.5px;color:#3c3c3c;transform-origin:0 0;transform:scaleX(0.9);-webkit-text-stroke:0.5px #f4ebe7">our</div>
<div class="t" style="left:973.9px;top:718.1px;font-size:30.5px;color:#3c3c3c;transform-origin:0 0;transform:scaleX(0.9);-webkit-text-stroke:0.5px #f4ebe7">pace</div>
<div class="t" style="left:1045.0px;top:718.1px;font-size:30.5px;color:#3c3c3c;transform-origin:0 0;transform:scaleX(0.9);-webkit-text-stroke:0.5px #f4ebe7">of</div>
<div class="t" style="left:1081.8px;top:718.1px;font-size:30.5px;color:#3c3c3c;transform-origin:0 0;transform:scaleX(0.9);-webkit-text-stroke:0.5px #f4ebe7">execution.</div>
<div class="t" style="left:922.0px;top:751.7px;font-size:30.5px;color:#3c3c3c;transform-origin:0 0;transform:scaleX(0.9);-webkit-text-stroke:0.5px #f4ebe7">a</div>
<div class="t" style="left:954.8px;top:751.7px;font-size:30.5px;color:#3c3c3c;transform-origin:0 0;transform:scaleX(0.9);-webkit-text-stroke:0.5px #f4ebe7">rare</div>
<div class="t" style="left:1022.6px;top:751.7px;font-size:30.5px;color:#3c3c3c;transform-origin:0 0;transform:scaleX(0.9);-webkit-text-stroke:0.5px #f4ebe7">combination</div>
<div class="t" style="left:1200.4px;top:751.7px;font-size:30.5px;color:#3c3c3c;transform-origin:0 0;transform:scaleX(0.9);-webkit-text-stroke:0.5px #f4ebe7">of</div>
<div class="t" style="left:922.0px;top:785.4px;font-size:30.5px;color:#3c3c3c;transform-origin:0 0;transform:scaleX(0.9);-webkit-text-stroke:0.5px #f4ebe7">creative</div>
<div class="t" style="left:1059.4px;top:785.4px;font-size:30.5px;color:#3c3c3c;transform-origin:0 0;transform:scaleX(0.9);-webkit-text-stroke:0.5px #f4ebe7">precision</div>
<div class="t" style="left:922.0px;top:819.0px;font-size:30.5px;color:#3c3c3c;transform-origin:0 0;transform:scaleX(0.9);-webkit-text-stroke:0.5px #f4ebe7">standards,</div>
<div class="t" style="left:1088.2px;top:819.0px;font-size:30.5px;color:#3c3c3c;transform-origin:0 0;transform:scaleX(0.9);-webkit-text-stroke:0.5px #f4ebe7">industry</div>
<div class="t" style="left:1185.6px;top:819.0px;font-size:30.5px;color:#3c3c3c;transform-origin:0 0;transform:scaleX(0.9);-webkit-text-stroke:0.5px #f4ebe7">ex</div>
<div class="t" style="left:922.0px;top:852.7px;font-size:30.5px;color:#3c3c3c;transform-origin:0 0;transform:scaleX(0.9);-webkit-text-stroke:0.5px #f4ebe7">workflows,</div>
<div class="t" style="left:1073.4px;top:852.7px;font-size:30.5px;color:#3c3c3c;transform-origin:0 0;transform:scaleX(0.9);-webkit-text-stroke:0.5px #f4ebe7">and</div>
<div class="t" style="left:1136.9px;top:852.7px;font-size:30.5px;color:#3c3c3c;transform-origin:0 0;transform:scaleX(0.9);-webkit-text-stroke:0.5px #f4ebe7">enable</div>
<div class="t" style="left:922.0px;top:886.3px;font-size:30.5px;color:#3c3c3c;transform-origin:0 0;transform:scaleX(0.9);-webkit-text-stroke:0.5px #f4ebe7">what</div>
<div class="t" style="left:998.4px;top:886.3px;font-size:30.5px;color:#3c3c3c;transform-origin:0 0;transform:scaleX(0.9);-webkit-text-stroke:0.5px #f4ebe7">matters</div>
<div class="t" style="left:1109.4px;top:886.3px;font-size:30.5px;color:#3c3c3c;transform-origin:0 0;transform:scaleX(0.9);-webkit-text-stroke:0.5px #f4ebe7">most—our</div>
<div class="t" style="left:922.0px;top:920.0px;font-size:30.5px;color:#3c3c3c;transform-origin:0 0;transform:scaleX(0.9);-webkit-text-stroke:0.5px #f4ebe7">of</div>
<div class="t" style="left:955.7px;top:920.0px;font-size:30.5px;color:#3c3c3c;transform-origin:0 0;transform:scaleX(0.9);-webkit-text-stroke:0.5px #f4ebe7">support</div>
<div class="t" style="left:1056.4px;top:920.0px;font-size:30.5px;color:#3c3c3c;transform-origin:0 0;transform:scaleX(0.9);-webkit-text-stroke:0.5px #f4ebe7">is</div>
<div class="t" style="left:1090.3px;top:920.0px;font-size:30.5px;color:#3c3c3c;transform-origin:0 0;transform:scaleX(0.9);-webkit-text-stroke:0.5px #f4ebe7">invaluable</div><div class="t" style="left:1711.6px;top:517.2px;width:627.1px;font-size:30.5px;color:#3c3c3c;text-align:justify;text-align-last:justify;transform-origin:0 0;transform:scaleX(0.96);-webkit-text-stroke:0.5px #f4ebe7">I wanted to commend Qcept team for the</div>
<div class="t" style="left:1711.6px;top:552.4px;width:627.1px;font-size:30.5px;color:#3c3c3c;text-align:justify;text-align-last:justify;transform-origin:0 0;transform:scaleX(0.96);-webkit-text-stroke:0.5px #f4ebe7">high quality professional work you have</div>
<div class="t" style="left:1711.6px;top:587.6px;width:627.1px;font-size:30.5px;color:#3c3c3c;text-align:justify;text-align-last:justify;transform-origin:0 0;transform:scaleX(0.96);-webkit-text-stroke:0.5px #f4ebe7">delivered for us. The customer is a Fortune</div>
<div class="t" style="left:1711.6px;top:622.8px;width:627.1px;font-size:30.5px;color:#3c3c3c;text-align:justify;text-align-last:justify;transform-origin:0 0;transform:scaleX(0.96);-webkit-text-stroke:0.5px #f4ebe7">50 one and it was important that your team</div>
<div class="t" style="left:1711.6px;top:658.0px;width:627.1px;font-size:30.5px;color:#3c3c3c;text-align:justify;text-align-last:justify;transform-origin:0 0;transform:scaleX(0.96);-webkit-text-stroke:0.5px #f4ebe7">understood the needs and produced</div>
<div class="t" style="left:1711.6px;top:693.2px;width:627.1px;font-size:30.5px;color:#3c3c3c;text-align:justify;text-align-last:justify;transform-origin:0 0;transform:scaleX(0.96);-webkit-text-stroke:0.5px #f4ebe7">collaterals that were professional, balanced</div>
<div class="t" style="left:1711.6px;top:728.4px;width:627.1px;font-size:30.5px;color:#3c3c3c;text-align:justify;text-align-last:justify;transform-origin:0 0;transform:scaleX(0.96);-webkit-text-stroke:0.5px #f4ebe7">and delivered the key messages without</div>
<div class="t" style="left:1711.6px;top:763.6px;width:627.1px;font-size:30.5px;color:#3c3c3c;text-align:justify;text-align-last:justify;transform-origin:0 0;transform:scaleX(0.96);-webkit-text-stroke:0.5px #f4ebe7">going overboard. I think the team did exactly</div>
<div class="t" style="left:1711.6px;top:798.8px;width:627.1px;font-size:30.5px;color:#3c3c3c;text-align:justify;text-align-last:justify;transform-origin:0 0;transform:scaleX(0.96);-webkit-text-stroke:0.5px #f4ebe7">that. Thank you for the partnership and we</div>
<div class="t" style="left:1711.6px;top:834.0px;width:627.1px;font-size:30.5px;color:#3c3c3c;text-align:justify;text-align-last:justify;transform-origin:0 0;transform:scaleX(0.96);-webkit-text-stroke:0.5px #f4ebe7">look forward to working with you folks in</div>
<div class="t" style="left:1711.6px;top:869.2px;font-size:30.5px;color:#3c3c3c;transform-origin:0 0;transform:scaleX(1.0067);-webkit-text-stroke:0.5px #f4ebe7">future opportunities.</div><div class="t" style="left:136.0px;top:1141.8px;font:bold 42px 'Liberation Serif',serif;line-height:1;color:#ffffff;transform-origin:0 0;transform:scaleX(0.9728);">Sarthak Brahma</div>
<div class="t" style="left:136.0px;top:1190.5px;font:normal 29px 'Liberation Sans',sans-serif;line-height:1;color:#ffffff;transform-origin:0 0;transform:scaleX(0.9738);-webkit-text-stroke:0.5px #1b2b2d;">CEO and Managing Partner</div>
<div class="t" style="left:914.6px;top:1136.8px;font:bold 42px 'Liberation Serif',serif;line-height:1;color:#ffffff;transform-origin:0 0;transform:scaleX(0.9876);">Phil Fersht</div>
<div class="t" style="left:914.6px;top:1185.5px;font:normal 29px 'Liberation Sans',sans-serif;line-height:1;color:#ffffff;transform-origin:0 0;transform:scaleX(0.9777);-webkit-text-stroke:0.5px #1b2b2d;">CEO and Chief Analyst</div>
<div class="t" style="left:1679.0px;top:1113.8px;font:bold 42px 'Liberation Serif',serif;line-height:1;color:#ffffff;transform-origin:0 0;transform:scaleX(0.9780);">Anirban Chakrabarti</div>
<div class="t" style="left:1679.0px;top:1162.3px;font:normal 28.5px 'Liberation Sans',sans-serif;line-height:1;color:#ffffff;transform-origin:0 0;-webkit-text-stroke:0.5px #1b2b2d;">Head of End User Compute and</div>
<div class="t" style="left:1679.0px;top:1196.4px;font:normal 28.5px 'Liberation Sans',sans-serif;line-height:1;color:#ffffff;transform-origin:0 0;transform:scaleX(1.0198);-webkit-text-stroke:0.5px #1b2b2d;">Workspace Transformation –</div>
<div class="t" style="left:1679.0px;top:1230.5px;font:normal 28.5px 'Liberation Sans',sans-serif;line-height:1;color:#ffffff;transform-origin:0 0;transform:scaleX(1.0223);-webkit-text-stroke:0.5px #1b2b2d;">North America</div>
<div class="t" style="left:90.0px;top:1316.1px;font:normal 24.7px 'Liberation Sans',sans-serif;line-height:1;color:#8c8c8c;transform-origin:0 0;transform:scaleX(0.9542);">© 2025, Qcept Presentations Pvt. Ltd.</div>
<div class="t" style="left:2354.7px;top:1317.0px;font:normal 23px 'Liberation Sans',sans-serif;line-height:1;color:#8c8c8c;transform-origin:0 0;">1</div>
</div><svg class="a" style="left:0;top:0" width="2805" height="1753"><rect x="1152.5" y="599.5" width="765.5" height="1005.5" fill="none" stroke="#ffffff" stroke-width="4"/><rect x="1152.5" y="599.5" width="765.5" height="1005.5" fill="none" stroke="#4f4f4f" stroke-width="1.5"/><path d="M1534.5 573v26" stroke="#4f4f4f" stroke-width="1.5"/><circle cx="1534.5" cy="563.5" r="10" fill="#f8f8f8" stroke="#707070" stroke-width="1.6"/><path d="M1538.5 560a5 5 0 1 0 1 5 M1539.5 556.5v4h-4" fill="none" stroke="#555" stroke-width="1.5"/><rect x="1145.7" y="592.7" width="12.6" height="12.6" rx="1.8" fill="#fff" stroke="#8a8a8a" stroke-width="1.3"/><rect x="1528.2" y="592.7" width="12.6" height="12.6" rx="1.8" fill="#fff" stroke="#8a8a8a" stroke-width="1.3"/><rect x="1911.7" y="592.7" width="12.6" height="12.6" rx="1.8" fill="#fff" stroke="#8a8a8a" stroke-width="1.3"/><rect x="1145.7" y="1095.7" width="12.6" height="12.6" rx="1.8" fill="#fff" stroke="#8a8a8a" stroke-width="1.3"/><rect x="1911.7" y="1095.7" width="12.6" height="12.6" rx="1.8" fill="#fff" stroke="#8a8a8a" stroke-width="1.3"/><rect x="1145.7" y="1598.7" width="12.6" height="12.6" rx="1.8" fill="#fff" stroke="#8a8a8a" stroke-width="1.3"/><rect x="1528.2" y="1598.7" width="12.6" height="12.6" rx="1.8" fill="#fff" stroke="#8a8a8a" stroke-width="1.3"/><rect x="1911.7" y="1598.7" width="12.6" height="12.6" rx="1.8" fill="#fff" stroke="#8a8a8a" stroke-width="1.3"/><rect x="1137.8" y="580.8" width="796.4" height="1038.4" fill="none" stroke="#ff0000" stroke-width="7.6"/></svg><div class="a" style="left:1518px;top:729px;width:342px;height:752px;border-radius:13px;background:linear-gradient(180deg,#e6e6e9 0%,#e5e5e7 45%,#dcdcdf 62%,#c9cdd1 75%,#c6c8cc 100%);box-shadow:0 8px 28px rgba(0,0,0,0.18),0 0 0 1px rgba(0,0,0,0.08)"></div><div class="a" style="left:1518px;top:729px;width:342px;height:752px;border-radius:13px;background:radial-gradient(ellipse 120px 220px at 230px 540px,rgba(225,190,190,0.55),rgba(225,190,190,0) 100%),radial-gradient(ellipse 140px 90px at 280px 20px,rgba(210,190,235,0.45),rgba(210,190,235,0)),radial-gradient(ellipse 160px 260px at 20px 620px,rgba(160,185,190,0.45),rgba(160,185,190,0))"></div><div class="a" style="left:1526.4px;top:1087.6px;width:324.6px;height:36px;border-radius:7px;background:#c5673f"></div><div class="t" style="left:1541.5px;top:745.4px;font:normal 22.7px 'Liberation Sans',sans-serif;line-height:1;color:#1d1d1d;transform-origin:0 0;transform:scaleX(0.9625);-webkit-text-stroke:0.4px #1d1d1d;">Cut</div>
<div class="t" style="left:1795.5px;top:745.4px;font:normal 22.7px 'Liberation Sans',sans-serif;line-height:1;color:#9d9d9d;transform-origin:0 0;">⌘ X</div>
<div class="t" style="left:1541.5px;top:781.8px;font:normal 22.7px 'Liberation Sans',sans-serif;line-height:1;color:#1d1d1d;transform-origin:0 0;transform:scaleX(0.9624);-webkit-text-stroke:0.4px #1d1d1d;">Copy</div>
<div class="t" style="left:1794.3px;top:781.8px;font:normal 22.7px 'Liberation Sans',sans-serif;line-height:1;color:#9d9d9d;transform-origin:0 0;">⌘ C</div>
<div class="t" style="left:1541.5px;top:818.3px;font:normal 22.7px 'Liberation Sans',sans-serif;line-height:1;color:#1d1d1d;transform-origin:0 0;transform:scaleX(0.9389);-webkit-text-stroke:0.4px #1d1d1d;">Paste</div>
<div class="t" style="left:1795.5px;top:818.3px;font:normal 22.7px 'Liberation Sans',sans-serif;line-height:1;color:#9d9d9d;transform-origin:0 0;">⌘ V</div>
<div class="t" style="left:1541.5px;top:873.8px;font:normal 22.7px 'Liberation Sans',sans-serif;line-height:1;color:#1d1d1d;transform-origin:0 0;transform:scaleX(0.9621);-webkit-text-stroke:0.4px #1d1d1d;">Group</div>
<svg class="a" style="left:0;top:0" width="2805" height="1753"><path d="M1826.5 877l6.5 7-6.5 7" fill="none" stroke="#222" stroke-width="2.6"/></svg><div class="t" style="left:1541.5px;top:910.8px;font:normal 22.7px 'Liberation Sans',sans-serif;line-height:1;color:#1d1d1d;transform-origin:0 0;-webkit-text-stroke:0.4px #1d1d1d;">Bring to Front</div>
<svg class="a" style="left:0;top:0" width="2805" height="1753"><path d="M1826.5 914l6.5 7-6.5 7" fill="none" stroke="#222" stroke-width="2.6"/></svg><div class="t" style="left:1541.5px;top:947.3px;font:normal 22.7px 'Liberation Sans',sans-serif;line-height:1;color:#1d1d1d;transform-origin:0 0;transform:scaleX(0.9820);-webkit-text-stroke:0.4px #1d1d1d;">Send to Back</div>
<svg class="a" style="left:0;top:0" width="2805" height="1753"><path d="M1826.5 950.5l6.5 7-6.5 7" fill="none" stroke="#222" stroke-width="2.6"/></svg><div class="t" style="left:1541.5px;top:983.3px;font:normal 22.7px 'Liberation Sans',sans-serif;line-height:1;color:#1d1d1d;transform-origin:0 0;transform:scaleX(0.9593);-webkit-text-stroke:0.4px #1d1d1d;">Lock</div>
<div class="t" style="left:1541.5px;top:1039.8px;font:normal 22.7px 'Liberation Sans',sans-serif;line-height:1;color:#a3a3a3;transform-origin:0 0;-webkit-text-stroke:0.4px #a3a3a3;">Hyperlink...</div>
<div class="t" style="left:1795.5px;top:1039.8px;font:normal 22.7px 'Liberation Sans',sans-serif;line-height:1;color:#9d9d9d;transform-origin:0 0;">⌘ K</div>
<div class="t" style="left:1541.5px;top:1149.8px;font:normal 22.7px 'Liberation Sans',sans-serif;line-height:1;color:#1d1d1d;transform-origin:0 0;transform:scaleX(1.0083);-webkit-text-stroke:0.4px #1d1d1d;">View Alt Text...</div>
<div class="t" style="left:1541.5px;top:1186.8px;font:normal 22.7px 'Liberation Sans',sans-serif;line-height:1;color:#1d1d1d;transform-origin:0 0;transform:scaleX(0.9849);-webkit-text-stroke:0.4px #1d1d1d;">Size and Position...</div>
<div class="t" style="left:1541.5px;top:1223.8px;font:normal 22.7px 'Liberation Sans',sans-serif;line-height:1;color:#1d1d1d;transform-origin:0 0;-webkit-text-stroke:0.4px #1d1d1d;">Format Picture...</div>
<div class="t" style="left:1774.7px;top:1223.8px;font:normal 22.7px 'Liberation Sans',sans-serif;line-height:1;color:#9d9d9d;transform-origin:0 0;">⇧ ⌘ 1</div>
<div class="t" style="left:1541.5px;top:1278.8px;font:normal 22.7px 'Liberation Sans',sans-serif;line-height:1;color:#1d1d1d;transform-origin:0 0;transform:scaleX(0.9859);-webkit-text-stroke:0.4px #1d1d1d;">New Comment</div>
<div class="t" style="left:1768.4px;top:1278.8px;font:normal 22.7px 'Liberation Sans',sans-serif;line-height:1;color:#9d9d9d;transform-origin:0 0;">⇧ ⌘ M</div>
<div class="t" style="left:1541.5px;top:1333.8px;font:normal 22.7px 'Liberation Sans',sans-serif;line-height:1;color:#a3a3a3;transform-origin:0 0;transform:scaleX(0.9869);-webkit-text-stroke:0.4px #a3a3a3;">Prathvi’s</div>
<div class="t" style="left:1541.5px;top:1369.8px;font:normal 22.7px 'Liberation Sans',sans-serif;line-height:1;color:#1d1d1d;transform-origin:0 0;transform:scaleX(0.9773);-webkit-text-stroke:0.4px #1d1d1d;">Take Photo</div>
<div class="t" style="left:1541.5px;top:1406.8px;font:normal 22.7px 'Liberation Sans',sans-serif;line-height:1;color:#1d1d1d;transform-origin:0 0;transform:scaleX(0.9835);-webkit-text-stroke:0.4px #1d1d1d;">Scan Documents</div>
<div class="t" style="left:1541.5px;top:1443.8px;font:normal 22.7px 'Liberation Sans',sans-serif;line-height:1;color:#1d1d1d;transform-origin:0 0;transform:scaleX(0.9906);-webkit-text-stroke:0.4px #1d1d1d;">Add Sketch</div>
<div class="t" style="left:1541.5px;top:1094.3px;font:normal 22.7px 'Liberation Sans',sans-serif;line-height:1;color:#ffffff;transform-origin:0 0;transform:scaleX(0.9758);-webkit-text-stroke:0.4px #fff;">Save as Picture...</div>
<div class="a" style="left:1542px;top:855.85px;width:294px;height:1.5px;background:#c3c3c5"></div><div class="a" style="left:1542px;top:1021.25px;width:294px;height:1.5px;background:#c3c3c5"></div><div class="a" style="left:1542px;top:1260.25px;width:294px;height:1.5px;background:#c3c3c5"></div><div class="a" style="left:1542px;top:1315.25px;width:294px;height:1.5px;background:#c3c3c5"></div><svg class="a" style="left:0;top:0" width="2805" height="1753"><rect x="1513.8" y="1076.6" width="351.8" height="58.5" fill="none" stroke="#ff0000" stroke-width="7.6"/></svg><div class="a" style="left:1212.4px;top:483px;width:86px;height:86px;border-radius:50%;background:#fff"></div><div class="a" style="left:1218.9px;top:489.5px;width:73px;height:73px;border-radius:50%;background:#ff0000"></div><div class="t" style="left:1242.1px;top:501.9px;font:bold 48px 'Liberation Sans',sans-serif;line-height:1;color:#fff;transform-origin:0 0;">1</div>
<div class="a" style="left:1412.7px;top:1062.8px;width:86px;height:86px;border-radius:50%;background:#fff"></div><div class="a" style="left:1419.2px;top:1069.3px;width:73px;height:73px;border-radius:50%;background:#ff0000"></div><div class="t" style="left:1442.4px;top:1081.7px;font:bold 48px 'Liberation Sans',sans-serif;line-height:1;color:#fff;transform-origin:0 0;">2</div>
</body></html>
